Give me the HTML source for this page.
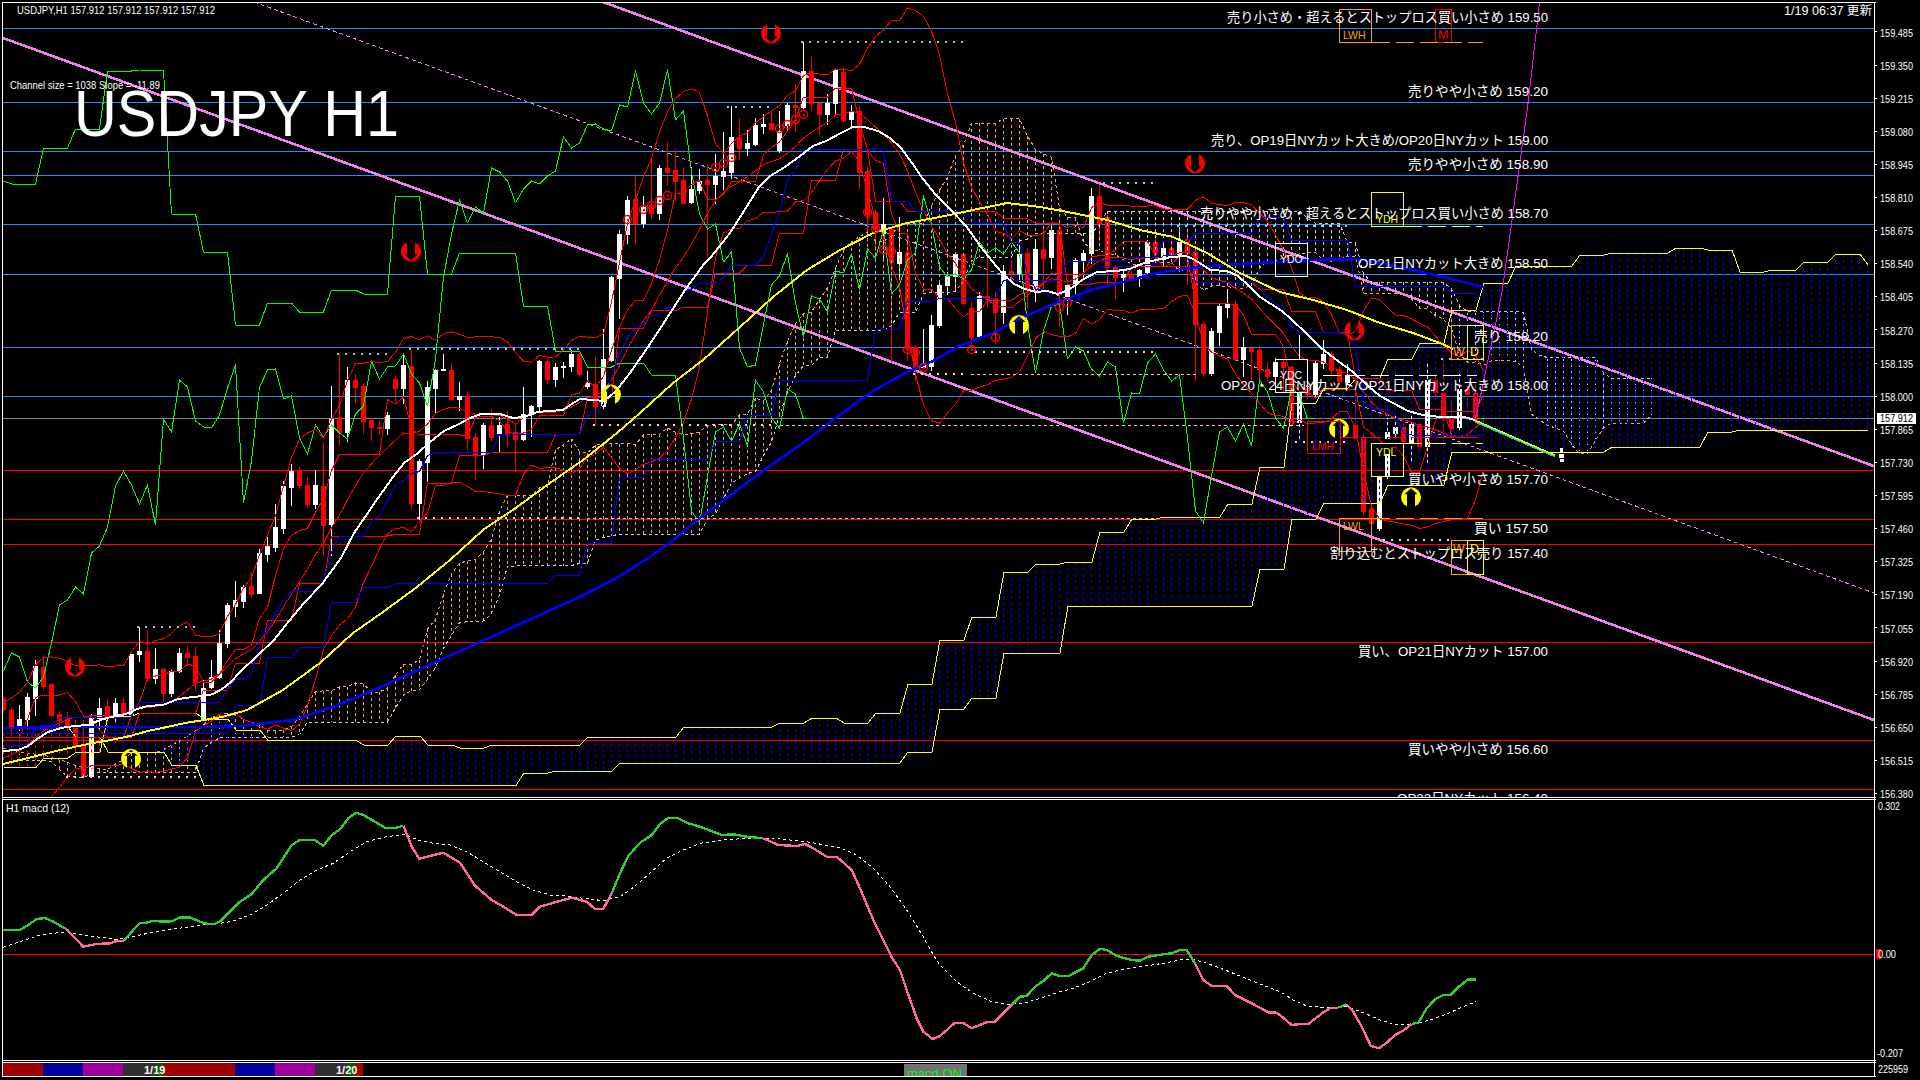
<!DOCTYPE html>
<html><head><meta charset="utf-8"><title>USDJPY H1</title>
<style>html,body{margin:0;padding:0;background:#000;overflow:hidden}svg{display:block}</style></head>
<body><svg width="1920" height="1080" viewBox="0 0 1920 1080" shape-rendering="crispEdges">
<rect width="1920" height="1080" fill="#000"/>
<defs><clipPath id="mc"><rect x="3" y="3" width="1872" height="794"/></clipPath></defs><g clip-path="url(#mc)">
<g id="levels">
<rect x="3" y="28" width="1872" height="1" fill="#1e90ff" />
<rect x="3" y="102" width="1872" height="1" fill="#1e90ff" />
<rect x="3" y="151" width="1872" height="1" fill="#1e90ff" />
<rect x="3" y="175" width="1872" height="1" fill="#1e90ff" />
<rect x="3" y="224" width="1872" height="1" fill="#1e90ff" />
<rect x="3" y="274" width="1872" height="1" fill="#1e90ff" />
<rect x="3" y="347" width="1872" height="1" fill="#1e90ff" />
<rect x="3" y="396" width="1872" height="1" fill="#1e90ff" />
<rect x="3" y="470" width="1872" height="1" fill="#ff0000" />
<rect x="3" y="519" width="1872" height="1" fill="#ff0000" />
<rect x="3" y="544" width="1872" height="1" fill="#ff0000" />
<rect x="3" y="642" width="1872" height="1" fill="#ff0000" />
<rect x="3" y="740" width="1872" height="1" fill="#ff0000" />
<rect x="3" y="789" width="1872" height="1" fill="#ff0000" />
<rect x="3" y="418" width="1872" height="1" fill="#778899" />
</g>
<g id="channel" shape-rendering="crispEdges">
<line x1="603" y1="2" x2="1875" y2="466.5" stroke="#ee82ee" stroke-width="2.6"/>
<line x1="3" y1="38" x2="1875" y2="720.4" stroke="#ee82ee" stroke-width="2.6"/>
<line x1="254" y1="2" x2="1875" y2="593.4" stroke="#ee82ee" stroke-width="1" stroke-dasharray="4 3"/>
</g>
<g id="candles">
<rect x="3" y="697" width="1" height="16" fill="#ff0000"/>
<rect x="1" y="699" width="5" height="11" fill="#ff0000"/>
<rect x="11" y="708" width="1" height="28" fill="#ff0000"/>
<rect x="9" y="710" width="5" height="19" fill="#ff0000"/>
<rect x="19" y="705" width="1" height="26" fill="#ffffff"/>
<rect x="17" y="719" width="5" height="10" fill="#ffffff"/>
<rect x="27" y="693" width="1" height="33" fill="#ffffff"/>
<rect x="25" y="697" width="5" height="23" fill="#ffffff"/>
<rect x="35" y="660" width="1" height="56" fill="#ffffff"/>
<rect x="33" y="666" width="5" height="33" fill="#ffffff"/>
<rect x="43" y="655" width="1" height="35" fill="#ff0000"/>
<rect x="41" y="667" width="5" height="20" fill="#ff0000"/>
<rect x="51" y="684" width="1" height="33" fill="#ff0000"/>
<rect x="49" y="684" width="5" height="32" fill="#ff0000"/>
<rect x="59" y="711" width="1" height="16" fill="#ff0000"/>
<rect x="57" y="714" width="5" height="7" fill="#ff0000"/>
<rect x="67" y="712" width="1" height="19" fill="#ff0000"/>
<rect x="65" y="719" width="5" height="7" fill="#ff0000"/>
<rect x="75" y="720" width="1" height="29" fill="#ff0000"/>
<rect x="73" y="725" width="5" height="21" fill="#ff0000"/>
<rect x="83" y="720" width="1" height="58" fill="#ff0000"/>
<rect x="81" y="745" width="5" height="32" fill="#ff0000"/>
<rect x="91" y="714" width="1" height="64" fill="#ffffff"/>
<rect x="89" y="717" width="5" height="60" fill="#ffffff"/>
<rect x="99" y="698" width="1" height="33" fill="#ffffff"/>
<rect x="97" y="708" width="5" height="11" fill="#ffffff"/>
<rect x="107" y="699" width="1" height="27" fill="#ff0000"/>
<rect x="105" y="706" width="5" height="11" fill="#ff0000"/>
<rect x="115" y="698" width="1" height="25" fill="#ffffff"/>
<rect x="113" y="703" width="5" height="12" fill="#ffffff"/>
<rect x="123" y="698" width="1" height="19" fill="#ff0000"/>
<rect x="121" y="703" width="5" height="12" fill="#ff0000"/>
<rect x="131" y="654" width="1" height="63" fill="#ffffff"/>
<rect x="129" y="654" width="5" height="61" fill="#ffffff"/>
<rect x="139" y="627" width="1" height="35" fill="#ffffff"/>
<rect x="137" y="651" width="5" height="4" fill="#ffffff"/>
<rect x="147" y="631" width="1" height="50" fill="#ff0000"/>
<rect x="145" y="651" width="5" height="28" fill="#ff0000"/>
<rect x="155" y="648" width="1" height="36" fill="#ffffff"/>
<rect x="153" y="669" width="5" height="10" fill="#ffffff"/>
<rect x="163" y="668" width="1" height="34" fill="#ff0000"/>
<rect x="161" y="669" width="5" height="25" fill="#ff0000"/>
<rect x="171" y="670" width="1" height="27" fill="#ffffff"/>
<rect x="169" y="671" width="5" height="23" fill="#ffffff"/>
<rect x="179" y="648" width="1" height="25" fill="#ffffff"/>
<rect x="177" y="653" width="5" height="19" fill="#ffffff"/>
<rect x="187" y="646" width="1" height="20" fill="#ff0000"/>
<rect x="185" y="653" width="5" height="5" fill="#ff0000"/>
<rect x="195" y="647" width="1" height="44" fill="#ff0000"/>
<rect x="193" y="656" width="5" height="27" fill="#ff0000"/>
<rect x="203" y="680" width="1" height="39" fill="#ffffff"/>
<rect x="201" y="688" width="5" height="31" fill="#ffffff"/>
<rect x="211" y="660" width="1" height="29" fill="#ffffff"/>
<rect x="209" y="677" width="5" height="11" fill="#ffffff"/>
<rect x="219" y="630" width="1" height="49" fill="#ffffff"/>
<rect x="217" y="643" width="5" height="35" fill="#ffffff"/>
<rect x="227" y="603" width="1" height="45" fill="#ffffff"/>
<rect x="225" y="605" width="5" height="39" fill="#ffffff"/>
<rect x="235" y="581" width="1" height="36" fill="#ffffff"/>
<rect x="233" y="600" width="5" height="7" fill="#ffffff"/>
<rect x="243" y="585" width="1" height="23" fill="#ffffff"/>
<rect x="241" y="587" width="5" height="15" fill="#ffffff"/>
<rect x="251" y="572" width="1" height="26" fill="#ff0000"/>
<rect x="249" y="586" width="5" height="9" fill="#ff0000"/>
<rect x="259" y="549" width="1" height="45" fill="#ffffff"/>
<rect x="257" y="553" width="5" height="41" fill="#ffffff"/>
<rect x="267" y="537" width="1" height="25" fill="#ffffff"/>
<rect x="265" y="546" width="5" height="9" fill="#ffffff"/>
<rect x="275" y="504" width="1" height="48" fill="#ffffff"/>
<rect x="273" y="527" width="5" height="21" fill="#ffffff"/>
<rect x="283" y="481" width="1" height="53" fill="#ffffff"/>
<rect x="281" y="486" width="5" height="43" fill="#ffffff"/>
<rect x="291" y="464" width="1" height="42" fill="#ffffff"/>
<rect x="289" y="471" width="5" height="17" fill="#ffffff"/>
<rect x="299" y="467" width="1" height="22" fill="#ff0000"/>
<rect x="297" y="470" width="5" height="16" fill="#ff0000"/>
<rect x="307" y="477" width="1" height="31" fill="#ff0000"/>
<rect x="305" y="485" width="5" height="20" fill="#ff0000"/>
<rect x="315" y="470" width="1" height="39" fill="#ffffff"/>
<rect x="313" y="485" width="5" height="20" fill="#ffffff"/>
<rect x="323" y="442" width="1" height="114" fill="#ff0000"/>
<rect x="321" y="486" width="5" height="40" fill="#ff0000"/>
<rect x="331" y="386" width="1" height="170" fill="#ffffff"/>
<rect x="329" y="419" width="5" height="106" fill="#ffffff"/>
<rect x="339" y="354" width="1" height="92" fill="#ff0000"/>
<rect x="337" y="417" width="5" height="16" fill="#ff0000"/>
<rect x="347" y="367" width="1" height="75" fill="#ffffff"/>
<rect x="345" y="380" width="5" height="53" fill="#ffffff"/>
<rect x="355" y="374" width="1" height="29" fill="#ff0000"/>
<rect x="353" y="380" width="5" height="8" fill="#ff0000"/>
<rect x="363" y="383" width="1" height="51" fill="#ff0000"/>
<rect x="361" y="386" width="5" height="36" fill="#ff0000"/>
<rect x="371" y="418" width="1" height="23" fill="#ff0000"/>
<rect x="369" y="420" width="5" height="8" fill="#ff0000"/>
<rect x="379" y="421" width="1" height="14" fill="#ff0000"/>
<rect x="377" y="427" width="5" height="2" fill="#ff0000"/>
<rect x="387" y="412" width="1" height="23" fill="#ffffff"/>
<rect x="385" y="415" width="5" height="14" fill="#ffffff"/>
<rect x="395" y="375" width="1" height="26" fill="#ff0000"/>
<rect x="393" y="379" width="5" height="10" fill="#ff0000"/>
<rect x="403" y="354" width="1" height="50" fill="#ffffff"/>
<rect x="401" y="365" width="5" height="24" fill="#ffffff"/>
<rect x="411" y="350" width="1" height="160" fill="#ff0000"/>
<rect x="409" y="366" width="5" height="138" fill="#ff0000"/>
<rect x="419" y="459" width="1" height="61" fill="#ffffff"/>
<rect x="417" y="461" width="5" height="43" fill="#ffffff"/>
<rect x="427" y="381" width="1" height="101" fill="#ffffff"/>
<rect x="425" y="387" width="5" height="76" fill="#ffffff"/>
<rect x="435" y="369" width="1" height="45" fill="#ffffff"/>
<rect x="433" y="370" width="5" height="19" fill="#ffffff"/>
<rect x="443" y="354" width="1" height="17" fill="#ffffff"/>
<rect x="441" y="369" width="5" height="2" fill="#ffffff"/>
<rect x="451" y="363" width="1" height="38" fill="#ff0000"/>
<rect x="449" y="370" width="5" height="30" fill="#ff0000"/>
<rect x="459" y="382" width="1" height="29" fill="#ffffff"/>
<rect x="457" y="396" width="5" height="4" fill="#ffffff"/>
<rect x="467" y="391" width="1" height="59" fill="#ff0000"/>
<rect x="465" y="396" width="5" height="43" fill="#ff0000"/>
<rect x="475" y="433" width="1" height="47" fill="#ff0000"/>
<rect x="473" y="437" width="5" height="18" fill="#ff0000"/>
<rect x="483" y="423" width="1" height="46" fill="#ffffff"/>
<rect x="481" y="425" width="5" height="30" fill="#ffffff"/>
<rect x="491" y="409" width="1" height="32" fill="#ff0000"/>
<rect x="489" y="425" width="5" height="13" fill="#ff0000"/>
<rect x="499" y="417" width="1" height="36" fill="#ffffff"/>
<rect x="497" y="425" width="5" height="9" fill="#ffffff"/>
<rect x="507" y="411" width="1" height="36" fill="#ff0000"/>
<rect x="505" y="424" width="5" height="10" fill="#ff0000"/>
<rect x="515" y="423" width="1" height="50" fill="#ff0000"/>
<rect x="513" y="432" width="5" height="8" fill="#ff0000"/>
<rect x="523" y="387" width="1" height="54" fill="#ffffff"/>
<rect x="521" y="414" width="5" height="26" fill="#ffffff"/>
<rect x="531" y="405" width="1" height="32" fill="#ffffff"/>
<rect x="529" y="406" width="5" height="9" fill="#ffffff"/>
<rect x="539" y="360" width="1" height="53" fill="#ffffff"/>
<rect x="537" y="361" width="5" height="46" fill="#ffffff"/>
<rect x="547" y="358" width="1" height="26" fill="#ff0000"/>
<rect x="545" y="361" width="5" height="19" fill="#ff0000"/>
<rect x="555" y="363" width="1" height="24" fill="#ffffff"/>
<rect x="553" y="367" width="5" height="13" fill="#ffffff"/>
<rect x="563" y="362" width="1" height="16" fill="#ffffff"/>
<rect x="561" y="366" width="5" height="2" fill="#ffffff"/>
<rect x="571" y="350" width="1" height="22" fill="#ffffff"/>
<rect x="569" y="354" width="5" height="13" fill="#ffffff"/>
<rect x="579" y="353" width="1" height="23" fill="#ff0000"/>
<rect x="577" y="354" width="5" height="21" fill="#ff0000"/>
<rect x="587" y="371" width="1" height="18" fill="#ffffff"/>
<rect x="585" y="383" width="5" height="4" fill="#ffffff"/>
<rect x="595" y="357" width="1" height="68" fill="#ff0000"/>
<rect x="593" y="384" width="5" height="23" fill="#ff0000"/>
<rect x="603" y="329" width="1" height="80" fill="#ffffff"/>
<rect x="601" y="359" width="5" height="48" fill="#ffffff"/>
<rect x="611" y="276" width="1" height="86" fill="#ffffff"/>
<rect x="609" y="277" width="5" height="84" fill="#ffffff"/>
<rect x="619" y="230" width="1" height="89" fill="#ffffff"/>
<rect x="617" y="234" width="5" height="45" fill="#ffffff"/>
<rect x="627" y="196" width="1" height="48" fill="#ffffff"/>
<rect x="625" y="200" width="5" height="35" fill="#ffffff"/>
<rect x="635" y="176" width="1" height="69" fill="#ff0000"/>
<rect x="633" y="199" width="5" height="25" fill="#ff0000"/>
<rect x="643" y="196" width="1" height="32" fill="#ffffff"/>
<rect x="641" y="207" width="5" height="17" fill="#ffffff"/>
<rect x="651" y="159" width="1" height="60" fill="#ff0000"/>
<rect x="649" y="205" width="5" height="9" fill="#ff0000"/>
<rect x="659" y="165" width="1" height="55" fill="#ffffff"/>
<rect x="657" y="168" width="5" height="46" fill="#ffffff"/>
<rect x="667" y="142" width="1" height="44" fill="#ff0000"/>
<rect x="665" y="168" width="5" height="5" fill="#ff0000"/>
<rect x="675" y="149" width="1" height="52" fill="#ff0000"/>
<rect x="673" y="170" width="5" height="12" fill="#ff0000"/>
<rect x="683" y="167" width="1" height="37" fill="#ff0000"/>
<rect x="681" y="180" width="5" height="24" fill="#ff0000"/>
<rect x="691" y="167" width="1" height="37" fill="#ffffff"/>
<rect x="689" y="189" width="5" height="14" fill="#ffffff"/>
<rect x="699" y="169" width="1" height="25" fill="#ffffff"/>
<rect x="697" y="181" width="5" height="10" fill="#ffffff"/>
<rect x="707" y="164" width="1" height="94" fill="#ff0000"/>
<rect x="705" y="180" width="5" height="5" fill="#ff0000"/>
<rect x="715" y="154" width="1" height="50" fill="#ffffff"/>
<rect x="713" y="176" width="5" height="9" fill="#ffffff"/>
<rect x="723" y="132" width="1" height="58" fill="#ffffff"/>
<rect x="721" y="171" width="5" height="6" fill="#ffffff"/>
<rect x="731" y="106" width="1" height="73" fill="#ffffff"/>
<rect x="729" y="137" width="5" height="36" fill="#ffffff"/>
<rect x="739" y="118" width="1" height="42" fill="#ff0000"/>
<rect x="737" y="137" width="5" height="12" fill="#ff0000"/>
<rect x="747" y="130" width="1" height="26" fill="#ffffff"/>
<rect x="745" y="143" width="5" height="6" fill="#ffffff"/>
<rect x="755" y="118" width="1" height="28" fill="#ffffff"/>
<rect x="753" y="125" width="5" height="20" fill="#ffffff"/>
<rect x="763" y="114" width="1" height="20" fill="#ffffff"/>
<rect x="761" y="124" width="5" height="3" fill="#ffffff"/>
<rect x="771" y="112" width="1" height="19" fill="#ff0000"/>
<rect x="769" y="123" width="5" height="7" fill="#ff0000"/>
<rect x="779" y="111" width="1" height="42" fill="#ffffff"/>
<rect x="777" y="131" width="5" height="20" fill="#ffffff"/>
<rect x="787" y="103" width="1" height="29" fill="#ffffff"/>
<rect x="785" y="105" width="5" height="21" fill="#ffffff"/>
<rect x="795" y="84" width="1" height="48" fill="#ff0000"/>
<rect x="793" y="105" width="5" height="3" fill="#ff0000"/>
<rect x="803" y="42" width="1" height="67" fill="#ffffff"/>
<rect x="801" y="71" width="5" height="37" fill="#ffffff"/>
<rect x="811" y="57" width="1" height="54" fill="#ff0000"/>
<rect x="809" y="71" width="5" height="33" fill="#ff0000"/>
<rect x="819" y="102" width="1" height="33" fill="#ff0000"/>
<rect x="817" y="103" width="5" height="12" fill="#ff0000"/>
<rect x="827" y="94" width="1" height="31" fill="#ffffff"/>
<rect x="825" y="103" width="5" height="12" fill="#ffffff"/>
<rect x="835" y="69" width="1" height="46" fill="#ffffff"/>
<rect x="833" y="70" width="5" height="34" fill="#ffffff"/>
<rect x="843" y="67" width="1" height="56" fill="#ff0000"/>
<rect x="841" y="72" width="5" height="49" fill="#ff0000"/>
<rect x="851" y="105" width="1" height="23" fill="#ffffff"/>
<rect x="849" y="111" width="5" height="9" fill="#ffffff"/>
<rect x="859" y="106" width="1" height="83" fill="#ff0000"/>
<rect x="857" y="111" width="5" height="62" fill="#ff0000"/>
<rect x="867" y="167" width="1" height="66" fill="#ff0000"/>
<rect x="865" y="171" width="5" height="44" fill="#ff0000"/>
<rect x="875" y="210" width="1" height="45" fill="#ff0000"/>
<rect x="873" y="212" width="5" height="18" fill="#ff0000"/>
<rect x="883" y="198" width="1" height="63" fill="#ffffff"/>
<rect x="881" y="224" width="5" height="10" fill="#ffffff"/>
<rect x="891" y="227" width="1" height="135" fill="#ff0000"/>
<rect x="889" y="229" width="5" height="34" fill="#ff0000"/>
<rect x="899" y="217" width="1" height="60" fill="#ffffff"/>
<rect x="897" y="252" width="5" height="12" fill="#ffffff"/>
<rect x="907" y="237" width="1" height="124" fill="#ff0000"/>
<rect x="905" y="252" width="5" height="97" fill="#ff0000"/>
<rect x="915" y="345" width="1" height="36" fill="#ff0000"/>
<rect x="913" y="347" width="5" height="21" fill="#ff0000"/>
<rect x="923" y="329" width="1" height="40" fill="#ffffff"/>
<rect x="921" y="365" width="5" height="3" fill="#ffffff"/>
<rect x="931" y="315" width="1" height="56" fill="#ffffff"/>
<rect x="929" y="325" width="5" height="42" fill="#ffffff"/>
<rect x="939" y="283" width="1" height="45" fill="#ffffff"/>
<rect x="937" y="285" width="5" height="41" fill="#ffffff"/>
<rect x="947" y="272" width="1" height="23" fill="#ffffff"/>
<rect x="945" y="276" width="5" height="10" fill="#ffffff"/>
<rect x="955" y="253" width="1" height="37" fill="#ffffff"/>
<rect x="953" y="254" width="5" height="23" fill="#ffffff"/>
<rect x="963" y="253" width="1" height="52" fill="#ff0000"/>
<rect x="961" y="254" width="5" height="50" fill="#ff0000"/>
<rect x="971" y="302" width="1" height="47" fill="#ff0000"/>
<rect x="969" y="308" width="5" height="30" fill="#ff0000"/>
<rect x="979" y="292" width="1" height="46" fill="#ffffff"/>
<rect x="977" y="296" width="5" height="41" fill="#ffffff"/>
<rect x="987" y="258" width="1" height="49" fill="#ff0000"/>
<rect x="985" y="296" width="5" height="4" fill="#ff0000"/>
<rect x="995" y="292" width="1" height="52" fill="#ff0000"/>
<rect x="993" y="298" width="5" height="15" fill="#ff0000"/>
<rect x="1003" y="265" width="1" height="59" fill="#ffffff"/>
<rect x="1001" y="271" width="5" height="42" fill="#ffffff"/>
<rect x="1011" y="260" width="1" height="21" fill="#ff0000"/>
<rect x="1009" y="271" width="5" height="3" fill="#ff0000"/>
<rect x="1019" y="241" width="1" height="41" fill="#ffffff"/>
<rect x="1017" y="254" width="5" height="20" fill="#ffffff"/>
<rect x="1027" y="248" width="1" height="60" fill="#ff0000"/>
<rect x="1025" y="253" width="5" height="38" fill="#ff0000"/>
<rect x="1035" y="239" width="1" height="63" fill="#ffffff"/>
<rect x="1033" y="249" width="5" height="43" fill="#ffffff"/>
<rect x="1043" y="223" width="1" height="69" fill="#ff0000"/>
<rect x="1041" y="249" width="5" height="10" fill="#ff0000"/>
<rect x="1051" y="224" width="1" height="45" fill="#ffffff"/>
<rect x="1049" y="230" width="5" height="28" fill="#ffffff"/>
<rect x="1059" y="224" width="1" height="103" fill="#ff0000"/>
<rect x="1057" y="230" width="5" height="65" fill="#ff0000"/>
<rect x="1067" y="283" width="1" height="32" fill="#ffffff"/>
<rect x="1065" y="285" width="5" height="12" fill="#ffffff"/>
<rect x="1075" y="258" width="1" height="36" fill="#ffffff"/>
<rect x="1073" y="260" width="5" height="25" fill="#ffffff"/>
<rect x="1083" y="250" width="1" height="29" fill="#ffffff"/>
<rect x="1081" y="253" width="5" height="8" fill="#ffffff"/>
<rect x="1091" y="188" width="1" height="76" fill="#ffffff"/>
<rect x="1089" y="196" width="5" height="58" fill="#ffffff"/>
<rect x="1099" y="185" width="1" height="57" fill="#ff0000"/>
<rect x="1097" y="196" width="5" height="29" fill="#ff0000"/>
<rect x="1107" y="215" width="1" height="70" fill="#ff0000"/>
<rect x="1105" y="217" width="5" height="51" fill="#ff0000"/>
<rect x="1115" y="265" width="1" height="34" fill="#ff0000"/>
<rect x="1113" y="267" width="5" height="11" fill="#ff0000"/>
<rect x="1123" y="269" width="1" height="23" fill="#ffffff"/>
<rect x="1121" y="274" width="5" height="4" fill="#ffffff"/>
<rect x="1131" y="271" width="1" height="10" fill="#ff0000"/>
<rect x="1129" y="274" width="5" height="6" fill="#ff0000"/>
<rect x="1139" y="269" width="1" height="18" fill="#ffffff"/>
<rect x="1137" y="270" width="5" height="9" fill="#ffffff"/>
<rect x="1147" y="240" width="1" height="34" fill="#ffffff"/>
<rect x="1145" y="242" width="5" height="31" fill="#ffffff"/>
<rect x="1155" y="236" width="1" height="23" fill="#ff0000"/>
<rect x="1153" y="242" width="5" height="12" fill="#ff0000"/>
<rect x="1163" y="244" width="1" height="22" fill="#ffffff"/>
<rect x="1161" y="248" width="5" height="12" fill="#ffffff"/>
<rect x="1171" y="239" width="1" height="17" fill="#ff0000"/>
<rect x="1169" y="248" width="5" height="7" fill="#ff0000"/>
<rect x="1179" y="227" width="1" height="41" fill="#ffffff"/>
<rect x="1177" y="242" width="5" height="13" fill="#ffffff"/>
<rect x="1187" y="230" width="1" height="55" fill="#ff0000"/>
<rect x="1185" y="239" width="5" height="15" fill="#ff0000"/>
<rect x="1195" y="250" width="1" height="131" fill="#ff0000"/>
<rect x="1193" y="252" width="5" height="73" fill="#ff0000"/>
<rect x="1203" y="322" width="1" height="54" fill="#ff0000"/>
<rect x="1201" y="324" width="5" height="50" fill="#ff0000"/>
<rect x="1211" y="328" width="1" height="48" fill="#ffffff"/>
<rect x="1209" y="331" width="5" height="43" fill="#ffffff"/>
<rect x="1219" y="304" width="1" height="42" fill="#ffffff"/>
<rect x="1217" y="306" width="5" height="27" fill="#ffffff"/>
<rect x="1227" y="289" width="1" height="29" fill="#ffffff"/>
<rect x="1225" y="304" width="5" height="4" fill="#ffffff"/>
<rect x="1235" y="300" width="1" height="61" fill="#ff0000"/>
<rect x="1233" y="304" width="5" height="56" fill="#ff0000"/>
<rect x="1243" y="337" width="1" height="40" fill="#ffffff"/>
<rect x="1241" y="347" width="5" height="13" fill="#ffffff"/>
<rect x="1251" y="346" width="1" height="35" fill="#ff0000"/>
<rect x="1249" y="348" width="5" height="4" fill="#ff0000"/>
<rect x="1259" y="345" width="1" height="36" fill="#ff0000"/>
<rect x="1257" y="350" width="5" height="20" fill="#ff0000"/>
<rect x="1267" y="362" width="1" height="19" fill="#ff0000"/>
<rect x="1265" y="369" width="5" height="8" fill="#ff0000"/>
<rect x="1275" y="358" width="1" height="21" fill="#ffffff"/>
<rect x="1273" y="362" width="5" height="15" fill="#ffffff"/>
<rect x="1283" y="360" width="1" height="34" fill="#ff0000"/>
<rect x="1281" y="362" width="5" height="6" fill="#ff0000"/>
<rect x="1291" y="366" width="1" height="61" fill="#ff0000"/>
<rect x="1289" y="367" width="5" height="57" fill="#ff0000"/>
<rect x="1299" y="391" width="1" height="48" fill="#ffffff"/>
<rect x="1297" y="393" width="5" height="30" fill="#ffffff"/>
<rect x="1307" y="386" width="1" height="13" fill="#ff0000"/>
<rect x="1305" y="388" width="5" height="7" fill="#ff0000"/>
<rect x="1315" y="360" width="1" height="37" fill="#ffffff"/>
<rect x="1313" y="363" width="5" height="32" fill="#ffffff"/>
<rect x="1323" y="340" width="1" height="29" fill="#ffffff"/>
<rect x="1321" y="354" width="5" height="10" fill="#ffffff"/>
<rect x="1331" y="351" width="1" height="24" fill="#ff0000"/>
<rect x="1329" y="354" width="5" height="17" fill="#ff0000"/>
<rect x="1339" y="367" width="1" height="18" fill="#ff0000"/>
<rect x="1337" y="369" width="5" height="13" fill="#ff0000"/>
<rect x="1347" y="364" width="1" height="21" fill="#ffffff"/>
<rect x="1345" y="375" width="5" height="8" fill="#ffffff"/>
<rect x="1355" y="382" width="1" height="59" fill="#ff0000"/>
<rect x="1353" y="425" width="5" height="14" fill="#ff0000"/>
<rect x="1363" y="435" width="1" height="80" fill="#ff0000"/>
<rect x="1361" y="437" width="5" height="75" fill="#ff0000"/>
<rect x="1371" y="507" width="1" height="20" fill="#ff0000"/>
<rect x="1369" y="509" width="5" height="15" fill="#ff0000"/>
<rect x="1379" y="474" width="1" height="57" fill="#ffffff"/>
<rect x="1377" y="476" width="5" height="53" fill="#ffffff"/>
<rect x="1387" y="418" width="1" height="61" fill="#ffffff"/>
<rect x="1385" y="432" width="5" height="45" fill="#ffffff"/>
<rect x="1395" y="415" width="1" height="22" fill="#ffffff"/>
<rect x="1393" y="427" width="5" height="7" fill="#ffffff"/>
<rect x="1403" y="424" width="1" height="20" fill="#ff0000"/>
<rect x="1401" y="427" width="5" height="15" fill="#ff0000"/>
<rect x="1411" y="415" width="1" height="47" fill="#ffffff"/>
<rect x="1409" y="424" width="5" height="19" fill="#ffffff"/>
<rect x="1419" y="422" width="1" height="27" fill="#ff0000"/>
<rect x="1417" y="424" width="5" height="23" fill="#ff0000"/>
<rect x="1427" y="363" width="1" height="101" fill="#ffffff"/>
<rect x="1425" y="380" width="5" height="67" fill="#ffffff"/>
<rect x="1435" y="376" width="1" height="21" fill="#ff0000"/>
<rect x="1433" y="380" width="5" height="13" fill="#ff0000"/>
<rect x="1443" y="359" width="1" height="73" fill="#ff0000"/>
<rect x="1441" y="393" width="5" height="26" fill="#ff0000"/>
<rect x="1451" y="401" width="1" height="31" fill="#ff0000"/>
<rect x="1449" y="418" width="5" height="11" fill="#ff0000"/>
<rect x="1459" y="374" width="1" height="58" fill="#ffffff"/>
<rect x="1457" y="389" width="5" height="39" fill="#ffffff"/>
<rect x="1467" y="386" width="1" height="20" fill="#ff0000"/>
<rect x="1465" y="389" width="5" height="6" fill="#ff0000"/>
<rect x="1475" y="385" width="1" height="37" fill="#ff0000"/>
<rect x="1473" y="393" width="5" height="27" fill="#ff0000"/>
<rect x="1483" y="418" width="1" height="1" fill="#00ff00"/>
<rect x="1481" y="418" width="5" height="1" fill="#00ff00"/>
</g>
<g id="cloudH1">
<line x1="19.5" y1="752" x2="19.5" y2="760" stroke="#f4a460" stroke-width="1" stroke-dasharray="3 3"/>
<line x1="27.5" y1="753" x2="27.5" y2="760" stroke="#f4a460" stroke-width="1" stroke-dasharray="3 3"/>
<line x1="35.5" y1="754" x2="35.5" y2="760" stroke="#f4a460" stroke-width="1" stroke-dasharray="3 3"/>
<line x1="43.5" y1="755" x2="43.5" y2="760" stroke="#f4a460" stroke-width="1" stroke-dasharray="3 3"/>
<line x1="51.5" y1="757" x2="51.5" y2="762" stroke="#f4a460" stroke-width="1" stroke-dasharray="3 3"/>
<line x1="59.5" y1="760" x2="59.5" y2="770" stroke="#f4a460" stroke-width="1" stroke-dasharray="3 3"/>
<line x1="67.5" y1="762" x2="67.5" y2="777" stroke="#f4a460" stroke-width="1" stroke-dasharray="3 3"/>
<line x1="75.5" y1="766" x2="75.5" y2="777" stroke="#f4a460" stroke-width="1" stroke-dasharray="3 3"/>
<line x1="83.5" y1="768" x2="83.5" y2="777" stroke="#f4a460" stroke-width="1" stroke-dasharray="3 3"/>
<line x1="91.5" y1="768" x2="91.5" y2="774" stroke="#f4a460" stroke-width="1" stroke-dasharray="3 3"/>
<line x1="99.5" y1="769" x2="99.5" y2="772" stroke="#f4a460" stroke-width="1" stroke-dasharray="3 3"/>
<line x1="107.5" y1="770" x2="107.5" y2="772" stroke="#f4a460" stroke-width="1" stroke-dasharray="3 3"/>
<line x1="115.5" y1="764" x2="115.5" y2="772" stroke="#f4a460" stroke-width="1" stroke-dasharray="3 3"/>
<line x1="123.5" y1="760" x2="123.5" y2="772" stroke="#f4a460" stroke-width="1" stroke-dasharray="3 3"/>
<line x1="131.5" y1="753" x2="131.5" y2="772" stroke="#f4a460" stroke-width="1" stroke-dasharray="3 3"/>
<line x1="139.5" y1="753" x2="139.5" y2="772" stroke="#f4a460" stroke-width="1" stroke-dasharray="3 3"/>
<line x1="147.5" y1="752" x2="147.5" y2="772" stroke="#f4a460" stroke-width="1" stroke-dasharray="3 3"/>
<line x1="155.5" y1="752" x2="155.5" y2="772" stroke="#f4a460" stroke-width="1" stroke-dasharray="3 3"/>
<line x1="163.5" y1="750" x2="163.5" y2="772" stroke="#f4a460" stroke-width="1" stroke-dasharray="3 3"/>
<line x1="171.5" y1="745" x2="171.5" y2="772" stroke="#f4a460" stroke-width="1" stroke-dasharray="3 3"/>
<line x1="179.5" y1="741" x2="179.5" y2="772" stroke="#f4a460" stroke-width="1" stroke-dasharray="3 3"/>
<line x1="187.5" y1="736" x2="187.5" y2="772" stroke="#f4a460" stroke-width="1" stroke-dasharray="3 3"/>
<line x1="195.5" y1="731" x2="195.5" y2="772" stroke="#f4a460" stroke-width="1" stroke-dasharray="3 3"/>
<line x1="203.5" y1="725" x2="203.5" y2="748" stroke="#f4a460" stroke-width="1" stroke-dasharray="3 3"/>
<line x1="211.5" y1="717" x2="211.5" y2="742" stroke="#f4a460" stroke-width="1" stroke-dasharray="3 3"/>
<line x1="219.5" y1="714" x2="219.5" y2="738" stroke="#f4a460" stroke-width="1" stroke-dasharray="3 3"/>
<line x1="227.5" y1="713" x2="227.5" y2="737" stroke="#f4a460" stroke-width="1" stroke-dasharray="3 3"/>
<line x1="235.5" y1="713" x2="235.5" y2="737" stroke="#f4a460" stroke-width="1" stroke-dasharray="3 3"/>
<line x1="243.5" y1="720" x2="243.5" y2="737" stroke="#f4a460" stroke-width="1" stroke-dasharray="3 3"/>
<line x1="251.5" y1="722" x2="251.5" y2="737" stroke="#f4a460" stroke-width="1" stroke-dasharray="3 3"/>
<line x1="259.5" y1="725" x2="259.5" y2="737" stroke="#f4a460" stroke-width="1" stroke-dasharray="3 3"/>
<line x1="267.5" y1="730" x2="267.5" y2="737" stroke="#f4a460" stroke-width="1" stroke-dasharray="3 3"/>
<line x1="275.5" y1="731" x2="275.5" y2="737" stroke="#f4a460" stroke-width="1" stroke-dasharray="3 3"/>
<line x1="283.5" y1="730" x2="283.5" y2="737" stroke="#f4a460" stroke-width="1" stroke-dasharray="3 3"/>
<line x1="291.5" y1="726" x2="291.5" y2="737" stroke="#f4a460" stroke-width="1" stroke-dasharray="3 3"/>
<line x1="299.5" y1="717" x2="299.5" y2="734" stroke="#f4a460" stroke-width="1" stroke-dasharray="3 3"/>
<line x1="307.5" y1="704" x2="307.5" y2="722" stroke="#f4a460" stroke-width="1" stroke-dasharray="3 3"/>
<line x1="315.5" y1="692" x2="315.5" y2="722" stroke="#f4a460" stroke-width="1" stroke-dasharray="3 3"/>
<line x1="323.5" y1="691" x2="323.5" y2="722" stroke="#f4a460" stroke-width="1" stroke-dasharray="3 3"/>
<line x1="331.5" y1="691" x2="331.5" y2="722" stroke="#f4a460" stroke-width="1" stroke-dasharray="3 3"/>
<line x1="339.5" y1="687" x2="339.5" y2="722" stroke="#f4a460" stroke-width="1" stroke-dasharray="3 3"/>
<line x1="347.5" y1="687" x2="347.5" y2="722" stroke="#f4a460" stroke-width="1" stroke-dasharray="3 3"/>
<line x1="355.5" y1="683" x2="355.5" y2="722" stroke="#f4a460" stroke-width="1" stroke-dasharray="3 3"/>
<line x1="363.5" y1="684" x2="363.5" y2="722" stroke="#f4a460" stroke-width="1" stroke-dasharray="3 3"/>
<line x1="371.5" y1="692" x2="371.5" y2="722" stroke="#f4a460" stroke-width="1" stroke-dasharray="3 3"/>
<line x1="379.5" y1="692" x2="379.5" y2="722" stroke="#f4a460" stroke-width="1" stroke-dasharray="3 3"/>
<line x1="387.5" y1="688" x2="387.5" y2="722" stroke="#f4a460" stroke-width="1" stroke-dasharray="3 3"/>
<line x1="395.5" y1="675" x2="395.5" y2="708" stroke="#f4a460" stroke-width="1" stroke-dasharray="3 3"/>
<line x1="403.5" y1="664" x2="403.5" y2="695" stroke="#f4a460" stroke-width="1" stroke-dasharray="3 3"/>
<line x1="411.5" y1="664" x2="411.5" y2="691" stroke="#f4a460" stroke-width="1" stroke-dasharray="3 3"/>
<line x1="419.5" y1="660" x2="419.5" y2="690" stroke="#f4a460" stroke-width="1" stroke-dasharray="3 3"/>
<line x1="427.5" y1="629" x2="427.5" y2="679" stroke="#f4a460" stroke-width="1" stroke-dasharray="3 3"/>
<line x1="435.5" y1="619" x2="435.5" y2="668" stroke="#f4a460" stroke-width="1" stroke-dasharray="3 3"/>
<line x1="443.5" y1="594" x2="443.5" y2="648" stroke="#f4a460" stroke-width="1" stroke-dasharray="3 3"/>
<line x1="451.5" y1="574" x2="451.5" y2="635" stroke="#f4a460" stroke-width="1" stroke-dasharray="3 3"/>
<line x1="459.5" y1="563" x2="459.5" y2="623" stroke="#f4a460" stroke-width="1" stroke-dasharray="3 3"/>
<line x1="467.5" y1="561" x2="467.5" y2="622" stroke="#f4a460" stroke-width="1" stroke-dasharray="3 3"/>
<line x1="475.5" y1="560" x2="475.5" y2="621" stroke="#f4a460" stroke-width="1" stroke-dasharray="3 3"/>
<line x1="483.5" y1="552" x2="483.5" y2="621" stroke="#f4a460" stroke-width="1" stroke-dasharray="3 3"/>
<line x1="491.5" y1="539" x2="491.5" y2="614" stroke="#f4a460" stroke-width="1" stroke-dasharray="3 3"/>
<line x1="499.5" y1="511" x2="499.5" y2="595" stroke="#f4a460" stroke-width="1" stroke-dasharray="3 3"/>
<line x1="507.5" y1="495" x2="507.5" y2="566" stroke="#f4a460" stroke-width="1" stroke-dasharray="3 3"/>
<line x1="515.5" y1="495" x2="515.5" y2="566" stroke="#f4a460" stroke-width="1" stroke-dasharray="3 3"/>
<line x1="523.5" y1="495" x2="523.5" y2="566" stroke="#f4a460" stroke-width="1" stroke-dasharray="3 3"/>
<line x1="531.5" y1="495" x2="531.5" y2="566" stroke="#f4a460" stroke-width="1" stroke-dasharray="3 3"/>
<line x1="539.5" y1="488" x2="539.5" y2="566" stroke="#f4a460" stroke-width="1" stroke-dasharray="3 3"/>
<line x1="547.5" y1="485" x2="547.5" y2="566" stroke="#f4a460" stroke-width="1" stroke-dasharray="3 3"/>
<line x1="555.5" y1="450" x2="555.5" y2="566" stroke="#f4a460" stroke-width="1" stroke-dasharray="3 3"/>
<line x1="563.5" y1="444" x2="563.5" y2="566" stroke="#f4a460" stroke-width="1" stroke-dasharray="3 3"/>
<line x1="571.5" y1="439" x2="571.5" y2="566" stroke="#f4a460" stroke-width="1" stroke-dasharray="3 3"/>
<line x1="579.5" y1="452" x2="579.5" y2="564" stroke="#f4a460" stroke-width="1" stroke-dasharray="3 3"/>
<line x1="587.5" y1="453" x2="587.5" y2="564" stroke="#f4a460" stroke-width="1" stroke-dasharray="3 3"/>
<line x1="595.5" y1="445" x2="595.5" y2="540" stroke="#f4a460" stroke-width="1" stroke-dasharray="3 3"/>
<line x1="603.5" y1="444" x2="603.5" y2="538" stroke="#f4a460" stroke-width="1" stroke-dasharray="3 3"/>
<line x1="611.5" y1="444" x2="611.5" y2="536" stroke="#f4a460" stroke-width="1" stroke-dasharray="3 3"/>
<line x1="619.5" y1="444" x2="619.5" y2="534" stroke="#f4a460" stroke-width="1" stroke-dasharray="3 3"/>
<line x1="627.5" y1="444" x2="627.5" y2="534" stroke="#f4a460" stroke-width="1" stroke-dasharray="3 3"/>
<line x1="635.5" y1="444" x2="635.5" y2="534" stroke="#f4a460" stroke-width="1" stroke-dasharray="3 3"/>
<line x1="643.5" y1="435" x2="643.5" y2="534" stroke="#f4a460" stroke-width="1" stroke-dasharray="3 3"/>
<line x1="651.5" y1="434" x2="651.5" y2="534" stroke="#f4a460" stroke-width="1" stroke-dasharray="3 3"/>
<line x1="659.5" y1="434" x2="659.5" y2="534" stroke="#f4a460" stroke-width="1" stroke-dasharray="3 3"/>
<line x1="667.5" y1="428" x2="667.5" y2="534" stroke="#f4a460" stroke-width="1" stroke-dasharray="3 3"/>
<line x1="675.5" y1="432" x2="675.5" y2="534" stroke="#f4a460" stroke-width="1" stroke-dasharray="3 3"/>
<line x1="683.5" y1="435" x2="683.5" y2="534" stroke="#f4a460" stroke-width="1" stroke-dasharray="3 3"/>
<line x1="691.5" y1="434" x2="691.5" y2="534" stroke="#f4a460" stroke-width="1" stroke-dasharray="3 3"/>
<line x1="699.5" y1="432" x2="699.5" y2="534" stroke="#f4a460" stroke-width="1" stroke-dasharray="3 3"/>
<line x1="707.5" y1="425" x2="707.5" y2="519" stroke="#f4a460" stroke-width="1" stroke-dasharray="3 3"/>
<line x1="715.5" y1="425" x2="715.5" y2="514" stroke="#f4a460" stroke-width="1" stroke-dasharray="3 3"/>
<line x1="723.5" y1="425" x2="723.5" y2="498" stroke="#f4a460" stroke-width="1" stroke-dasharray="3 3"/>
<line x1="731.5" y1="425" x2="731.5" y2="483" stroke="#f4a460" stroke-width="1" stroke-dasharray="3 3"/>
<line x1="739.5" y1="415" x2="739.5" y2="478" stroke="#f4a460" stroke-width="1" stroke-dasharray="3 3"/>
<line x1="747.5" y1="414" x2="747.5" y2="474" stroke="#f4a460" stroke-width="1" stroke-dasharray="3 3"/>
<line x1="755.5" y1="398" x2="755.5" y2="472" stroke="#f4a460" stroke-width="1" stroke-dasharray="3 3"/>
<line x1="763.5" y1="401" x2="763.5" y2="456" stroke="#f4a460" stroke-width="1" stroke-dasharray="3 3"/>
<line x1="771.5" y1="390" x2="771.5" y2="442" stroke="#f4a460" stroke-width="1" stroke-dasharray="3 3"/>
<line x1="779.5" y1="364" x2="779.5" y2="416" stroke="#f4a460" stroke-width="1" stroke-dasharray="3 3"/>
<line x1="787.5" y1="341" x2="787.5" y2="392" stroke="#f4a460" stroke-width="1" stroke-dasharray="3 3"/>
<line x1="795.5" y1="324" x2="795.5" y2="376" stroke="#f4a460" stroke-width="1" stroke-dasharray="3 3"/>
<line x1="803.5" y1="314" x2="803.5" y2="366" stroke="#f4a460" stroke-width="1" stroke-dasharray="3 3"/>
<line x1="811.5" y1="312" x2="811.5" y2="366" stroke="#f4a460" stroke-width="1" stroke-dasharray="3 3"/>
<line x1="819.5" y1="300" x2="819.5" y2="357" stroke="#f4a460" stroke-width="1" stroke-dasharray="3 3"/>
<line x1="827.5" y1="288" x2="827.5" y2="357" stroke="#f4a460" stroke-width="1" stroke-dasharray="3 3"/>
<line x1="835.5" y1="268" x2="835.5" y2="330" stroke="#f4a460" stroke-width="1" stroke-dasharray="3 3"/>
<line x1="843.5" y1="250" x2="843.5" y2="330" stroke="#f4a460" stroke-width="1" stroke-dasharray="3 3"/>
<line x1="851.5" y1="242" x2="851.5" y2="330" stroke="#f4a460" stroke-width="1" stroke-dasharray="3 3"/>
<line x1="859.5" y1="237" x2="859.5" y2="330" stroke="#f4a460" stroke-width="1" stroke-dasharray="3 3"/>
<line x1="867.5" y1="232" x2="867.5" y2="330" stroke="#f4a460" stroke-width="1" stroke-dasharray="3 3"/>
<line x1="875.5" y1="241" x2="875.5" y2="330" stroke="#f4a460" stroke-width="1" stroke-dasharray="3 3"/>
<line x1="883.5" y1="241" x2="883.5" y2="330" stroke="#f4a460" stroke-width="1" stroke-dasharray="3 3"/>
<line x1="891.5" y1="236" x2="891.5" y2="326" stroke="#f4a460" stroke-width="1" stroke-dasharray="3 3"/>
<line x1="899.5" y1="223" x2="899.5" y2="312" stroke="#f4a460" stroke-width="1" stroke-dasharray="3 3"/>
<line x1="907.5" y1="223" x2="907.5" y2="312" stroke="#f4a460" stroke-width="1" stroke-dasharray="3 3"/>
<line x1="915.5" y1="223" x2="915.5" y2="312" stroke="#f4a460" stroke-width="1" stroke-dasharray="3 3"/>
<line x1="923.5" y1="223" x2="923.5" y2="294" stroke="#f4a460" stroke-width="1" stroke-dasharray="3 3"/>
<line x1="931.5" y1="206" x2="931.5" y2="292" stroke="#f4a460" stroke-width="1" stroke-dasharray="3 3"/>
<line x1="939.5" y1="190" x2="939.5" y2="292" stroke="#f4a460" stroke-width="1" stroke-dasharray="3 3"/>
<line x1="947.5" y1="177" x2="947.5" y2="292" stroke="#f4a460" stroke-width="1" stroke-dasharray="3 3"/>
<line x1="955.5" y1="156" x2="955.5" y2="291" stroke="#f4a460" stroke-width="1" stroke-dasharray="3 3"/>
<line x1="963.5" y1="145" x2="963.5" y2="282" stroke="#f4a460" stroke-width="1" stroke-dasharray="3 3"/>
<line x1="971.5" y1="123" x2="971.5" y2="260" stroke="#f4a460" stroke-width="1" stroke-dasharray="3 3"/>
<line x1="979.5" y1="123" x2="979.5" y2="257" stroke="#f4a460" stroke-width="1" stroke-dasharray="3 3"/>
<line x1="987.5" y1="123" x2="987.5" y2="257" stroke="#f4a460" stroke-width="1" stroke-dasharray="3 3"/>
<line x1="995.5" y1="123" x2="995.5" y2="257" stroke="#f4a460" stroke-width="1" stroke-dasharray="3 3"/>
<line x1="1003.5" y1="119" x2="1003.5" y2="257" stroke="#f4a460" stroke-width="1" stroke-dasharray="3 3"/>
<line x1="1011.5" y1="119" x2="1011.5" y2="257" stroke="#f4a460" stroke-width="1" stroke-dasharray="3 3"/>
<line x1="1019.5" y1="119" x2="1019.5" y2="241" stroke="#f4a460" stroke-width="1" stroke-dasharray="3 3"/>
<line x1="1027.5" y1="136" x2="1027.5" y2="239" stroke="#f4a460" stroke-width="1" stroke-dasharray="3 3"/>
<line x1="1035.5" y1="150" x2="1035.5" y2="233" stroke="#f4a460" stroke-width="1" stroke-dasharray="3 3"/>
<line x1="1043.5" y1="154" x2="1043.5" y2="233" stroke="#f4a460" stroke-width="1" stroke-dasharray="3 3"/>
<line x1="1051.5" y1="157" x2="1051.5" y2="233" stroke="#f4a460" stroke-width="1" stroke-dasharray="3 3"/>
<line x1="1059.5" y1="208" x2="1059.5" y2="233" stroke="#f4a460" stroke-width="1" stroke-dasharray="3 3"/>
<line x1="1067.5" y1="217" x2="1067.5" y2="233" stroke="#f4a460" stroke-width="1" stroke-dasharray="3 3"/>
<line x1="1075.5" y1="218" x2="1075.5" y2="233" stroke="#f4a460" stroke-width="1" stroke-dasharray="3 3"/>
<line x1="1083.5" y1="233" x2="1083.5" y2="242" stroke="#d8bfd8" stroke-width="1" stroke-dasharray="3 3"/>
<line x1="1091.5" y1="233" x2="1091.5" y2="250" stroke="#d8bfd8" stroke-width="1" stroke-dasharray="3 3"/>
<line x1="1099.5" y1="225" x2="1099.5" y2="250" stroke="#d8bfd8" stroke-width="1" stroke-dasharray="3 3"/>
<line x1="1107.5" y1="211" x2="1107.5" y2="255" stroke="#d8bfd8" stroke-width="1" stroke-dasharray="3 3"/>
<line x1="1115.5" y1="211" x2="1115.5" y2="255" stroke="#d8bfd8" stroke-width="1" stroke-dasharray="3 3"/>
<line x1="1123.5" y1="211" x2="1123.5" y2="260" stroke="#d8bfd8" stroke-width="1" stroke-dasharray="3 3"/>
<line x1="1131.5" y1="211" x2="1131.5" y2="264" stroke="#d8bfd8" stroke-width="1" stroke-dasharray="3 3"/>
<line x1="1139.5" y1="211" x2="1139.5" y2="265" stroke="#d8bfd8" stroke-width="1" stroke-dasharray="3 3"/>
<line x1="1147.5" y1="211" x2="1147.5" y2="268" stroke="#d8bfd8" stroke-width="1" stroke-dasharray="3 3"/>
<line x1="1155.5" y1="211" x2="1155.5" y2="262" stroke="#d8bfd8" stroke-width="1" stroke-dasharray="3 3"/>
<line x1="1163.5" y1="211" x2="1163.5" y2="262" stroke="#d8bfd8" stroke-width="1" stroke-dasharray="3 3"/>
<line x1="1171.5" y1="211" x2="1171.5" y2="262" stroke="#d8bfd8" stroke-width="1" stroke-dasharray="3 3"/>
<line x1="1179.5" y1="211" x2="1179.5" y2="272" stroke="#d8bfd8" stroke-width="1" stroke-dasharray="3 3"/>
<line x1="1187.5" y1="211" x2="1187.5" y2="269" stroke="#d8bfd8" stroke-width="1" stroke-dasharray="3 3"/>
<line x1="1195.5" y1="211" x2="1195.5" y2="283" stroke="#d8bfd8" stroke-width="1" stroke-dasharray="3 3"/>
<line x1="1203.5" y1="211" x2="1203.5" y2="290" stroke="#d8bfd8" stroke-width="1" stroke-dasharray="3 3"/>
<line x1="1211.5" y1="211" x2="1211.5" y2="286" stroke="#d8bfd8" stroke-width="1" stroke-dasharray="3 3"/>
<line x1="1219.5" y1="211" x2="1219.5" y2="286" stroke="#d8bfd8" stroke-width="1" stroke-dasharray="3 3"/>
<line x1="1227.5" y1="211" x2="1227.5" y2="286" stroke="#d8bfd8" stroke-width="1" stroke-dasharray="3 3"/>
<line x1="1235.5" y1="211" x2="1235.5" y2="288" stroke="#d8bfd8" stroke-width="1" stroke-dasharray="3 3"/>
<line x1="1243.5" y1="211" x2="1243.5" y2="288" stroke="#d8bfd8" stroke-width="1" stroke-dasharray="3 3"/>
<line x1="1251.5" y1="211" x2="1251.5" y2="286" stroke="#d8bfd8" stroke-width="1" stroke-dasharray="3 3"/>
<line x1="1259.5" y1="211" x2="1259.5" y2="268" stroke="#d8bfd8" stroke-width="1" stroke-dasharray="3 3"/>
<line x1="1267.5" y1="211" x2="1267.5" y2="261" stroke="#d8bfd8" stroke-width="1" stroke-dasharray="3 3"/>
<line x1="1275.5" y1="211" x2="1275.5" y2="261" stroke="#d8bfd8" stroke-width="1" stroke-dasharray="3 3"/>
<line x1="1283.5" y1="211" x2="1283.5" y2="258" stroke="#d8bfd8" stroke-width="1" stroke-dasharray="3 3"/>
<line x1="1291.5" y1="211" x2="1291.5" y2="254" stroke="#d8bfd8" stroke-width="1" stroke-dasharray="3 3"/>
<line x1="1299.5" y1="211" x2="1299.5" y2="254" stroke="#d8bfd8" stroke-width="1" stroke-dasharray="3 3"/>
<line x1="1307.5" y1="218" x2="1307.5" y2="253" stroke="#d8bfd8" stroke-width="1" stroke-dasharray="3 3"/>
<line x1="1315.5" y1="224" x2="1315.5" y2="253" stroke="#d8bfd8" stroke-width="1" stroke-dasharray="3 3"/>
<line x1="1323.5" y1="224" x2="1323.5" y2="260" stroke="#d8bfd8" stroke-width="1" stroke-dasharray="3 3"/>
<line x1="1331.5" y1="224" x2="1331.5" y2="261" stroke="#d8bfd8" stroke-width="1" stroke-dasharray="3 3"/>
<line x1="1339.5" y1="224" x2="1339.5" y2="260" stroke="#d8bfd8" stroke-width="1" stroke-dasharray="3 3"/>
<line x1="1347.5" y1="242" x2="1347.5" y2="256" stroke="#d8bfd8" stroke-width="1" stroke-dasharray="3 3"/>
<line x1="1355.5" y1="243" x2="1355.5" y2="256" stroke="#d8bfd8" stroke-width="1" stroke-dasharray="3 3"/>
<line x1="1363.5" y1="274" x2="1363.5" y2="293" stroke="#d8bfd8" stroke-width="1" stroke-dasharray="3 3"/>
<line x1="1371.5" y1="282" x2="1371.5" y2="293" stroke="#d8bfd8" stroke-width="1" stroke-dasharray="3 3"/>
<line x1="1379.5" y1="282" x2="1379.5" y2="293" stroke="#d8bfd8" stroke-width="1" stroke-dasharray="3 3"/>
<line x1="1387.5" y1="282" x2="1387.5" y2="293" stroke="#d8bfd8" stroke-width="1" stroke-dasharray="3 3"/>
<line x1="1395.5" y1="282" x2="1395.5" y2="293" stroke="#d8bfd8" stroke-width="1" stroke-dasharray="3 3"/>
<line x1="1403.5" y1="282" x2="1403.5" y2="294" stroke="#d8bfd8" stroke-width="1" stroke-dasharray="3 3"/>
<line x1="1411.5" y1="282" x2="1411.5" y2="299" stroke="#d8bfd8" stroke-width="1" stroke-dasharray="3 3"/>
<line x1="1419.5" y1="282" x2="1419.5" y2="308" stroke="#d8bfd8" stroke-width="1" stroke-dasharray="3 3"/>
<line x1="1427.5" y1="282" x2="1427.5" y2="308" stroke="#d8bfd8" stroke-width="1" stroke-dasharray="3 3"/>
<line x1="1435.5" y1="282" x2="1435.5" y2="316" stroke="#d8bfd8" stroke-width="1" stroke-dasharray="3 3"/>
<line x1="1443.5" y1="282" x2="1443.5" y2="319" stroke="#d8bfd8" stroke-width="1" stroke-dasharray="3 3"/>
<line x1="1451.5" y1="289" x2="1451.5" y2="328" stroke="#d8bfd8" stroke-width="1" stroke-dasharray="3 3"/>
<line x1="1459.5" y1="306" x2="1459.5" y2="354" stroke="#d8bfd8" stroke-width="1" stroke-dasharray="3 3"/>
<line x1="1467.5" y1="312" x2="1467.5" y2="362" stroke="#d8bfd8" stroke-width="1" stroke-dasharray="3 3"/>
<line x1="1475.5" y1="312" x2="1475.5" y2="362" stroke="#d8bfd8" stroke-width="1" stroke-dasharray="3 3"/>
<line x1="1483.5" y1="312" x2="1483.5" y2="365" stroke="#d8bfd8" stroke-width="1" stroke-dasharray="3 3"/>
<line x1="1491.5" y1="312" x2="1491.5" y2="361" stroke="#d8bfd8" stroke-width="1" stroke-dasharray="3 3"/>
<line x1="1499.5" y1="312" x2="1499.5" y2="361" stroke="#d8bfd8" stroke-width="1" stroke-dasharray="3 3"/>
<line x1="1507.5" y1="312" x2="1507.5" y2="361" stroke="#d8bfd8" stroke-width="1" stroke-dasharray="3 3"/>
<line x1="1515.5" y1="312" x2="1515.5" y2="362" stroke="#d8bfd8" stroke-width="1" stroke-dasharray="3 3"/>
<line x1="1523.5" y1="312" x2="1523.5" y2="368" stroke="#d8bfd8" stroke-width="1" stroke-dasharray="3 3"/>
<line x1="1531.5" y1="350" x2="1531.5" y2="414" stroke="#d8bfd8" stroke-width="1" stroke-dasharray="3 3"/>
<line x1="1539.5" y1="356" x2="1539.5" y2="420" stroke="#d8bfd8" stroke-width="1" stroke-dasharray="3 3"/>
<line x1="1547.5" y1="358" x2="1547.5" y2="425" stroke="#d8bfd8" stroke-width="1" stroke-dasharray="3 3"/>
<line x1="1555.5" y1="358" x2="1555.5" y2="428" stroke="#d8bfd8" stroke-width="1" stroke-dasharray="3 3"/>
<line x1="1563.5" y1="358" x2="1563.5" y2="431" stroke="#d8bfd8" stroke-width="1" stroke-dasharray="3 3"/>
<line x1="1571.5" y1="358" x2="1571.5" y2="445" stroke="#d8bfd8" stroke-width="1" stroke-dasharray="3 3"/>
<line x1="1579.5" y1="358" x2="1579.5" y2="454" stroke="#d8bfd8" stroke-width="1" stroke-dasharray="3 3"/>
<line x1="1587.5" y1="358" x2="1587.5" y2="454" stroke="#d8bfd8" stroke-width="1" stroke-dasharray="3 3"/>
<line x1="1595.5" y1="358" x2="1595.5" y2="441" stroke="#d8bfd8" stroke-width="1" stroke-dasharray="3 3"/>
<line x1="1603.5" y1="372" x2="1603.5" y2="428" stroke="#d8bfd8" stroke-width="1" stroke-dasharray="3 3"/>
<line x1="1611.5" y1="378" x2="1611.5" y2="423" stroke="#d8bfd8" stroke-width="1" stroke-dasharray="3 3"/>
<line x1="1619.5" y1="378" x2="1619.5" y2="423" stroke="#d8bfd8" stroke-width="1" stroke-dasharray="3 3"/>
<line x1="1627.5" y1="378" x2="1627.5" y2="423" stroke="#d8bfd8" stroke-width="1" stroke-dasharray="3 3"/>
<line x1="1635.5" y1="378" x2="1635.5" y2="423" stroke="#d8bfd8" stroke-width="1" stroke-dasharray="3 3"/>
<line x1="1643.5" y1="378" x2="1643.5" y2="423" stroke="#d8bfd8" stroke-width="1" stroke-dasharray="3 3"/>
<line x1="1651.5" y1="378" x2="1651.5" y2="415" stroke="#d8bfd8" stroke-width="1" stroke-dasharray="3 3"/>
<polyline points="3.5,748.1 11.5,749.6 19.5,752.3 27.5,753.3 35.5,754.2 43.5,755.1 51.5,757.1 59.5,759.5 67.5,762.2 75.5,765.7 83.5,767.6 91.5,768.3 99.5,769.0 107.5,769.6 115.5,764.0 123.5,759.5 131.5,752.9 139.5,752.5 147.5,752.5 155.5,752.5 163.5,749.6 171.5,745.2 179.5,740.8 187.5,736.1 195.5,730.9 203.5,724.8 211.5,717.4 219.5,714.2 227.5,713.0 235.5,713.0 243.5,719.6 251.5,722.1 259.5,725.0 267.5,730.0 275.5,730.8 283.5,730.0 291.5,726.5 299.5,717.2 307.5,703.5 315.5,691.7 323.5,690.9 331.5,690.8 339.5,686.8 347.5,686.8 355.5,683.0 363.5,684.0 371.5,692.0 379.5,692.0 387.5,688.0 395.5,675.2 403.5,664.2 411.5,664.2 419.5,659.8 427.5,629.0 435.5,619.2 443.5,594.2 451.5,574.0 459.5,563.2 467.5,560.8 475.5,559.8 483.5,551.8 491.5,539.2 499.5,511.2 507.5,495.2 515.5,495.2 523.5,495.2 531.5,495.2 539.5,487.8 547.5,485.2 555.5,450.0 563.5,444.5 571.5,438.8 579.5,451.5 587.5,453.0 595.5,445.0 603.5,443.5 611.5,443.5 619.5,443.5 627.5,443.5 635.5,444.5 643.5,435.0 651.5,434.5 659.5,434.5 667.5,427.8 675.5,432.5 683.5,434.8 691.5,433.8 699.5,432.0 707.5,425.2 715.5,424.8 723.5,424.8 731.5,424.8 739.5,414.8 747.5,413.8 755.5,398.2 763.5,400.8 771.5,390.2 779.5,363.8 787.5,340.8 795.5,323.8 803.5,313.8 811.5,312.0 819.5,299.5 827.5,287.8 835.5,268.5 843.5,250.0 851.5,242.0 859.5,236.8 867.5,231.8 875.5,241.2 883.5,241.2 891.5,236.2 899.5,223.2 907.5,223.2 915.5,223.2 923.5,223.2 931.5,205.8 939.5,190.5 947.5,177.0 955.5,155.5 963.5,145.0 971.5,123.2 979.5,123.2 987.5,123.2 995.5,123.2 1003.5,118.8 1011.5,118.8 1019.5,118.8 1027.5,136.0 1035.5,149.5 1043.5,154.2 1051.5,157.2 1059.5,207.8 1067.5,217.2 1075.5,217.5 1083.5,242.2 1091.5,250.0 1099.5,250.0 1107.5,254.8 1115.5,254.8 1123.5,259.8 1131.5,263.8 1139.5,265.0 1147.5,267.5 1155.5,262.0 1163.5,262.0 1171.5,262.0 1179.5,271.5 1187.5,268.8 1195.5,282.8 1203.5,290.0 1211.5,286.0 1219.5,285.8 1227.5,286.5 1235.5,288.0 1243.5,288.0 1251.5,285.5 1259.5,268.0 1267.5,261.0 1275.5,261.0 1283.5,258.0 1291.5,254.0 1299.5,254.0 1307.5,252.8 1315.5,252.8 1323.5,260.2 1331.5,261.2 1339.5,259.5 1347.5,256.0 1355.5,256.0 1363.5,293.0 1371.5,293.0 1379.5,293.0 1387.5,293.0 1395.5,293.0 1403.5,293.8 1411.5,298.8 1419.5,308.5 1427.5,308.5 1435.5,316.0 1443.5,319.0 1451.5,328.2 1459.5,354.0 1467.5,362.0 1475.5,362.0 1483.5,365.2 1491.5,360.8 1499.5,360.8 1507.5,360.8 1515.5,361.5 1523.5,367.5 1531.5,414.2 1539.5,420.2 1547.5,425.0 1555.5,428.2 1563.5,431.0 1571.5,444.8 1579.5,453.8 1587.5,453.8 1595.5,440.8 1603.5,427.8 1611.5,423.0 1619.5,423.0 1627.5,423.0 1635.5,423.0 1643.5,423.0 1651.5,415.0" fill="none" stroke="#f4a460" stroke-width="1" stroke-dasharray="3 3"/>
<polyline points="19.5,760.0 27.5,760.0 35.5,760.0 43.5,760.1 51.5,761.7 59.5,769.8 67.5,776.7 75.5,777.0 83.5,777.0 91.5,774.5 99.5,772.0 107.5,772.0 115.5,772.0 123.5,772.0 131.5,772.0 139.5,772.0 147.5,772.0 155.5,772.0 163.5,772.0 171.5,772.0 179.5,772.0 187.5,772.0 195.5,772.0 203.5,748.3 211.5,742.3 219.5,737.9 227.5,737.1 235.5,737.0 243.5,737.0 251.5,737.0 259.5,737.0 267.5,737.0 275.5,737.0 283.5,737.0 291.5,737.0 299.5,734.5 307.5,722.0 315.5,722.0 323.5,722.0 331.5,722.0 339.5,722.0 347.5,722.0 355.5,722.0 363.5,722.0 371.5,722.0 379.5,722.0 387.5,722.0 395.5,707.8 403.5,695.3 411.5,690.8 419.5,690.0 427.5,679.2 435.5,667.7 443.5,648.2 451.5,635.3 459.5,622.8 467.5,621.7 475.5,621.4 483.5,621.0 491.5,613.5 499.5,595.3 507.5,566.0 515.5,566.0 523.5,565.5 531.5,565.5 539.5,565.5 547.5,565.5 555.5,565.5 563.5,565.5 571.5,565.5 579.5,563.5 587.5,563.5 595.5,540.0 603.5,537.5 611.5,536.0 619.5,534.0 627.5,534.0 635.5,534.0 643.5,534.0 651.5,534.0 659.5,534.0 667.5,534.0 675.5,534.0 683.5,534.0 691.5,534.0 699.5,534.0 707.5,519.0 715.5,514.0 723.5,498.5 731.5,483.0 739.5,478.5 747.5,473.5 755.5,471.5 763.5,455.5 771.5,442.0 779.5,415.5 787.5,392.5 795.5,375.5 803.5,365.5 811.5,365.5 819.5,357.0 827.5,357.0 835.5,330.5 843.5,330.5 851.5,330.5 859.5,330.5 867.5,330.5 875.5,330.5 883.5,330.5 891.5,325.5 899.5,312.5 907.5,312.5 915.5,312.5 923.5,293.5 931.5,292.5 939.5,292.5 947.5,292.5 955.5,291.0 963.5,281.5 971.5,260.5 979.5,257.0 987.5,257.0 995.5,257.0 1003.5,257.0 1011.5,257.0 1019.5,241.0 1027.5,239.0 1035.5,233.0 1043.5,233.0 1051.5,233.0 1059.5,233.0 1067.5,233.0 1075.5,233.0 1083.5,233.0 1091.5,233.0 1099.5,225.0 1107.5,211.0 1115.5,211.0 1123.5,211.0 1131.5,211.0 1139.5,211.0 1147.5,211.0 1155.5,211.0 1163.5,211.0 1171.5,211.0 1179.5,211.0 1187.5,211.0 1195.5,211.0 1203.5,211.0 1211.5,211.0 1219.5,211.0 1227.5,211.0 1235.5,211.0 1243.5,211.0 1251.5,211.0 1259.5,211.0 1267.5,211.0 1275.5,211.0 1283.5,211.0 1291.5,211.0 1299.5,211.0 1307.5,218.5 1315.5,223.5 1323.5,223.5 1331.5,223.5 1339.5,223.5 1347.5,242.5 1355.5,243.0 1363.5,273.5 1371.5,282.5 1379.5,282.5 1387.5,282.5 1395.5,282.5 1403.5,282.5 1411.5,282.5 1419.5,282.5 1427.5,282.5 1435.5,282.5 1443.5,282.5 1451.5,289.0 1459.5,305.5 1467.5,311.5 1475.5,311.5 1483.5,311.5 1491.5,311.5 1499.5,311.5 1507.5,311.5 1515.5,311.5 1523.5,312.5 1531.5,349.5 1539.5,355.5 1547.5,357.5 1555.5,357.5 1563.5,357.5 1571.5,357.5 1579.5,357.5 1587.5,357.5 1595.5,357.5 1603.5,372.5 1611.5,378.5 1619.5,378.5 1627.5,378.5 1635.5,378.5 1643.5,378.5 1651.5,378.5" fill="none" stroke="#d8bfd8" stroke-width="1" stroke-dasharray="3 3"/>
</g>
<g id="cloudH4">
<line x1="3.5" y1="727" x2="3.5" y2="768" stroke="#ff0000" stroke-width="1" stroke-dasharray="3 3"/>
<line x1="11.5" y1="727" x2="11.5" y2="768" stroke="#ff0000" stroke-width="1" stroke-dasharray="3 3"/>
<line x1="19.5" y1="727" x2="19.5" y2="768" stroke="#ff0000" stroke-width="1" stroke-dasharray="3 3"/>
<line x1="27.5" y1="727" x2="27.5" y2="768" stroke="#ff0000" stroke-width="1" stroke-dasharray="3 3"/>
<line x1="35.5" y1="727" x2="35.5" y2="768" stroke="#ff0000" stroke-width="1" stroke-dasharray="3 3"/>
<line x1="43.5" y1="727" x2="43.5" y2="758" stroke="#ff0000" stroke-width="1" stroke-dasharray="3 3"/>
<line x1="51.5" y1="727" x2="51.5" y2="758" stroke="#ff0000" stroke-width="1" stroke-dasharray="3 3"/>
<line x1="59.5" y1="727" x2="59.5" y2="758" stroke="#ff0000" stroke-width="1" stroke-dasharray="3 3"/>
<line x1="67.5" y1="727" x2="67.5" y2="758" stroke="#ff0000" stroke-width="1" stroke-dasharray="3 3"/>
<line x1="75.5" y1="737" x2="75.5" y2="752" stroke="#ff0000" stroke-width="1" stroke-dasharray="3 3"/>
<line x1="83.5" y1="737" x2="83.5" y2="752" stroke="#ff0000" stroke-width="1" stroke-dasharray="3 3"/>
<line x1="91.5" y1="737" x2="91.5" y2="752" stroke="#ff0000" stroke-width="1" stroke-dasharray="3 3"/>
<line x1="99.5" y1="737" x2="99.5" y2="752" stroke="#ff0000" stroke-width="1" stroke-dasharray="3 3"/>
<line x1="107.5" y1="716" x2="107.5" y2="752" stroke="#0000ff" stroke-width="1" stroke-dasharray="3 3"/>
<line x1="115.5" y1="716" x2="115.5" y2="752" stroke="#0000ff" stroke-width="1" stroke-dasharray="3 3"/>
<line x1="123.5" y1="716" x2="123.5" y2="752" stroke="#0000ff" stroke-width="1" stroke-dasharray="3 3"/>
<line x1="131.5" y1="716" x2="131.5" y2="752" stroke="#0000ff" stroke-width="1" stroke-dasharray="3 3"/>
<line x1="139.5" y1="713" x2="139.5" y2="752" stroke="#0000ff" stroke-width="1" stroke-dasharray="3 3"/>
<line x1="147.5" y1="713" x2="147.5" y2="752" stroke="#0000ff" stroke-width="1" stroke-dasharray="3 3"/>
<line x1="155.5" y1="713" x2="155.5" y2="752" stroke="#0000ff" stroke-width="1" stroke-dasharray="3 3"/>
<line x1="163.5" y1="713" x2="163.5" y2="752" stroke="#0000ff" stroke-width="1" stroke-dasharray="3 3"/>
<line x1="171.5" y1="713" x2="171.5" y2="766" stroke="#0000ff" stroke-width="1" stroke-dasharray="3 3"/>
<line x1="179.5" y1="713" x2="179.5" y2="766" stroke="#0000ff" stroke-width="1" stroke-dasharray="3 3"/>
<line x1="187.5" y1="713" x2="187.5" y2="766" stroke="#0000ff" stroke-width="1" stroke-dasharray="3 3"/>
<line x1="195.5" y1="713" x2="195.5" y2="766" stroke="#0000ff" stroke-width="1" stroke-dasharray="3 3"/>
<line x1="203.5" y1="719" x2="203.5" y2="786" stroke="#0000ff" stroke-width="1" stroke-dasharray="3 3"/>
<line x1="211.5" y1="719" x2="211.5" y2="786" stroke="#0000ff" stroke-width="1" stroke-dasharray="3 3"/>
<line x1="219.5" y1="719" x2="219.5" y2="786" stroke="#0000ff" stroke-width="1" stroke-dasharray="3 3"/>
<line x1="227.5" y1="719" x2="227.5" y2="786" stroke="#0000ff" stroke-width="1" stroke-dasharray="3 3"/>
<line x1="235.5" y1="730" x2="235.5" y2="786" stroke="#0000ff" stroke-width="1" stroke-dasharray="3 3"/>
<line x1="243.5" y1="730" x2="243.5" y2="786" stroke="#0000ff" stroke-width="1" stroke-dasharray="3 3"/>
<line x1="251.5" y1="730" x2="251.5" y2="786" stroke="#0000ff" stroke-width="1" stroke-dasharray="3 3"/>
<line x1="259.5" y1="730" x2="259.5" y2="786" stroke="#0000ff" stroke-width="1" stroke-dasharray="3 3"/>
<line x1="267.5" y1="740" x2="267.5" y2="786" stroke="#0000ff" stroke-width="1" stroke-dasharray="3 3"/>
<line x1="275.5" y1="740" x2="275.5" y2="786" stroke="#0000ff" stroke-width="1" stroke-dasharray="3 3"/>
<line x1="283.5" y1="740" x2="283.5" y2="786" stroke="#0000ff" stroke-width="1" stroke-dasharray="3 3"/>
<line x1="291.5" y1="740" x2="291.5" y2="786" stroke="#0000ff" stroke-width="1" stroke-dasharray="3 3"/>
<line x1="299.5" y1="740" x2="299.5" y2="786" stroke="#0000ff" stroke-width="1" stroke-dasharray="3 3"/>
<line x1="307.5" y1="740" x2="307.5" y2="786" stroke="#0000ff" stroke-width="1" stroke-dasharray="3 3"/>
<line x1="315.5" y1="740" x2="315.5" y2="786" stroke="#0000ff" stroke-width="1" stroke-dasharray="3 3"/>
<line x1="323.5" y1="740" x2="323.5" y2="786" stroke="#0000ff" stroke-width="1" stroke-dasharray="3 3"/>
<line x1="331.5" y1="740" x2="331.5" y2="786" stroke="#0000ff" stroke-width="1" stroke-dasharray="3 3"/>
<line x1="339.5" y1="740" x2="339.5" y2="786" stroke="#0000ff" stroke-width="1" stroke-dasharray="3 3"/>
<line x1="347.5" y1="740" x2="347.5" y2="786" stroke="#0000ff" stroke-width="1" stroke-dasharray="3 3"/>
<line x1="355.5" y1="740" x2="355.5" y2="786" stroke="#0000ff" stroke-width="1" stroke-dasharray="3 3"/>
<line x1="363.5" y1="745" x2="363.5" y2="786" stroke="#0000ff" stroke-width="1" stroke-dasharray="3 3"/>
<line x1="371.5" y1="745" x2="371.5" y2="786" stroke="#0000ff" stroke-width="1" stroke-dasharray="3 3"/>
<line x1="379.5" y1="745" x2="379.5" y2="786" stroke="#0000ff" stroke-width="1" stroke-dasharray="3 3"/>
<line x1="387.5" y1="745" x2="387.5" y2="786" stroke="#0000ff" stroke-width="1" stroke-dasharray="3 3"/>
<line x1="395.5" y1="736" x2="395.5" y2="786" stroke="#0000ff" stroke-width="1" stroke-dasharray="3 3"/>
<line x1="403.5" y1="736" x2="403.5" y2="786" stroke="#0000ff" stroke-width="1" stroke-dasharray="3 3"/>
<line x1="411.5" y1="736" x2="411.5" y2="786" stroke="#0000ff" stroke-width="1" stroke-dasharray="3 3"/>
<line x1="419.5" y1="736" x2="419.5" y2="786" stroke="#0000ff" stroke-width="1" stroke-dasharray="3 3"/>
<line x1="427.5" y1="745" x2="427.5" y2="786" stroke="#0000ff" stroke-width="1" stroke-dasharray="3 3"/>
<line x1="435.5" y1="745" x2="435.5" y2="786" stroke="#0000ff" stroke-width="1" stroke-dasharray="3 3"/>
<line x1="443.5" y1="745" x2="443.5" y2="786" stroke="#0000ff" stroke-width="1" stroke-dasharray="3 3"/>
<line x1="451.5" y1="745" x2="451.5" y2="786" stroke="#0000ff" stroke-width="1" stroke-dasharray="3 3"/>
<line x1="459.5" y1="748" x2="459.5" y2="786" stroke="#0000ff" stroke-width="1" stroke-dasharray="3 3"/>
<line x1="467.5" y1="748" x2="467.5" y2="786" stroke="#0000ff" stroke-width="1" stroke-dasharray="3 3"/>
<line x1="475.5" y1="748" x2="475.5" y2="786" stroke="#0000ff" stroke-width="1" stroke-dasharray="3 3"/>
<line x1="483.5" y1="748" x2="483.5" y2="786" stroke="#0000ff" stroke-width="1" stroke-dasharray="3 3"/>
<line x1="491.5" y1="745" x2="491.5" y2="786" stroke="#0000ff" stroke-width="1" stroke-dasharray="3 3"/>
<line x1="499.5" y1="745" x2="499.5" y2="786" stroke="#0000ff" stroke-width="1" stroke-dasharray="3 3"/>
<line x1="507.5" y1="745" x2="507.5" y2="786" stroke="#0000ff" stroke-width="1" stroke-dasharray="3 3"/>
<line x1="515.5" y1="745" x2="515.5" y2="786" stroke="#0000ff" stroke-width="1" stroke-dasharray="3 3"/>
<line x1="523.5" y1="745" x2="523.5" y2="773" stroke="#0000ff" stroke-width="1" stroke-dasharray="3 3"/>
<line x1="531.5" y1="745" x2="531.5" y2="773" stroke="#0000ff" stroke-width="1" stroke-dasharray="3 3"/>
<line x1="539.5" y1="745" x2="539.5" y2="773" stroke="#0000ff" stroke-width="1" stroke-dasharray="3 3"/>
<line x1="547.5" y1="745" x2="547.5" y2="773" stroke="#0000ff" stroke-width="1" stroke-dasharray="3 3"/>
<line x1="555.5" y1="745" x2="555.5" y2="771" stroke="#0000ff" stroke-width="1" stroke-dasharray="3 3"/>
<line x1="563.5" y1="745" x2="563.5" y2="771" stroke="#0000ff" stroke-width="1" stroke-dasharray="3 3"/>
<line x1="571.5" y1="745" x2="571.5" y2="771" stroke="#0000ff" stroke-width="1" stroke-dasharray="3 3"/>
<line x1="579.5" y1="745" x2="579.5" y2="771" stroke="#0000ff" stroke-width="1" stroke-dasharray="3 3"/>
<line x1="587.5" y1="737" x2="587.5" y2="771" stroke="#0000ff" stroke-width="1" stroke-dasharray="3 3"/>
<line x1="595.5" y1="737" x2="595.5" y2="771" stroke="#0000ff" stroke-width="1" stroke-dasharray="3 3"/>
<line x1="603.5" y1="737" x2="603.5" y2="771" stroke="#0000ff" stroke-width="1" stroke-dasharray="3 3"/>
<line x1="611.5" y1="737" x2="611.5" y2="771" stroke="#0000ff" stroke-width="1" stroke-dasharray="3 3"/>
<line x1="619.5" y1="737" x2="619.5" y2="763" stroke="#0000ff" stroke-width="1" stroke-dasharray="3 3"/>
<line x1="627.5" y1="737" x2="627.5" y2="763" stroke="#0000ff" stroke-width="1" stroke-dasharray="3 3"/>
<line x1="635.5" y1="737" x2="635.5" y2="763" stroke="#0000ff" stroke-width="1" stroke-dasharray="3 3"/>
<line x1="643.5" y1="737" x2="643.5" y2="763" stroke="#0000ff" stroke-width="1" stroke-dasharray="3 3"/>
<line x1="651.5" y1="737" x2="651.5" y2="763" stroke="#0000ff" stroke-width="1" stroke-dasharray="3 3"/>
<line x1="659.5" y1="737" x2="659.5" y2="763" stroke="#0000ff" stroke-width="1" stroke-dasharray="3 3"/>
<line x1="667.5" y1="737" x2="667.5" y2="763" stroke="#0000ff" stroke-width="1" stroke-dasharray="3 3"/>
<line x1="675.5" y1="737" x2="675.5" y2="763" stroke="#0000ff" stroke-width="1" stroke-dasharray="3 3"/>
<line x1="683.5" y1="727" x2="683.5" y2="763" stroke="#0000ff" stroke-width="1" stroke-dasharray="3 3"/>
<line x1="691.5" y1="727" x2="691.5" y2="763" stroke="#0000ff" stroke-width="1" stroke-dasharray="3 3"/>
<line x1="699.5" y1="727" x2="699.5" y2="763" stroke="#0000ff" stroke-width="1" stroke-dasharray="3 3"/>
<line x1="707.5" y1="727" x2="707.5" y2="763" stroke="#0000ff" stroke-width="1" stroke-dasharray="3 3"/>
<line x1="715.5" y1="727" x2="715.5" y2="763" stroke="#0000ff" stroke-width="1" stroke-dasharray="3 3"/>
<line x1="723.5" y1="727" x2="723.5" y2="763" stroke="#0000ff" stroke-width="1" stroke-dasharray="3 3"/>
<line x1="731.5" y1="727" x2="731.5" y2="763" stroke="#0000ff" stroke-width="1" stroke-dasharray="3 3"/>
<line x1="739.5" y1="727" x2="739.5" y2="763" stroke="#0000ff" stroke-width="1" stroke-dasharray="3 3"/>
<line x1="747.5" y1="727" x2="747.5" y2="763" stroke="#0000ff" stroke-width="1" stroke-dasharray="3 3"/>
<line x1="755.5" y1="727" x2="755.5" y2="763" stroke="#0000ff" stroke-width="1" stroke-dasharray="3 3"/>
<line x1="763.5" y1="727" x2="763.5" y2="763" stroke="#0000ff" stroke-width="1" stroke-dasharray="3 3"/>
<line x1="771.5" y1="727" x2="771.5" y2="763" stroke="#0000ff" stroke-width="1" stroke-dasharray="3 3"/>
<line x1="779.5" y1="723" x2="779.5" y2="763" stroke="#0000ff" stroke-width="1" stroke-dasharray="3 3"/>
<line x1="787.5" y1="723" x2="787.5" y2="763" stroke="#0000ff" stroke-width="1" stroke-dasharray="3 3"/>
<line x1="795.5" y1="723" x2="795.5" y2="763" stroke="#0000ff" stroke-width="1" stroke-dasharray="3 3"/>
<line x1="803.5" y1="723" x2="803.5" y2="763" stroke="#0000ff" stroke-width="1" stroke-dasharray="3 3"/>
<line x1="811.5" y1="718" x2="811.5" y2="763" stroke="#0000ff" stroke-width="1" stroke-dasharray="3 3"/>
<line x1="819.5" y1="718" x2="819.5" y2="763" stroke="#0000ff" stroke-width="1" stroke-dasharray="3 3"/>
<line x1="827.5" y1="718" x2="827.5" y2="763" stroke="#0000ff" stroke-width="1" stroke-dasharray="3 3"/>
<line x1="835.5" y1="718" x2="835.5" y2="763" stroke="#0000ff" stroke-width="1" stroke-dasharray="3 3"/>
<line x1="843.5" y1="723" x2="843.5" y2="763" stroke="#0000ff" stroke-width="1" stroke-dasharray="3 3"/>
<line x1="851.5" y1="723" x2="851.5" y2="763" stroke="#0000ff" stroke-width="1" stroke-dasharray="3 3"/>
<line x1="859.5" y1="723" x2="859.5" y2="763" stroke="#0000ff" stroke-width="1" stroke-dasharray="3 3"/>
<line x1="867.5" y1="723" x2="867.5" y2="763" stroke="#0000ff" stroke-width="1" stroke-dasharray="3 3"/>
<line x1="875.5" y1="713" x2="875.5" y2="763" stroke="#0000ff" stroke-width="1" stroke-dasharray="3 3"/>
<line x1="883.5" y1="713" x2="883.5" y2="763" stroke="#0000ff" stroke-width="1" stroke-dasharray="3 3"/>
<line x1="891.5" y1="713" x2="891.5" y2="763" stroke="#0000ff" stroke-width="1" stroke-dasharray="3 3"/>
<line x1="899.5" y1="713" x2="899.5" y2="763" stroke="#0000ff" stroke-width="1" stroke-dasharray="3 3"/>
<line x1="907.5" y1="684" x2="907.5" y2="752" stroke="#0000ff" stroke-width="1" stroke-dasharray="3 3"/>
<line x1="915.5" y1="684" x2="915.5" y2="752" stroke="#0000ff" stroke-width="1" stroke-dasharray="3 3"/>
<line x1="923.5" y1="684" x2="923.5" y2="752" stroke="#0000ff" stroke-width="1" stroke-dasharray="3 3"/>
<line x1="931.5" y1="684" x2="931.5" y2="752" stroke="#0000ff" stroke-width="1" stroke-dasharray="3 3"/>
<line x1="939.5" y1="640" x2="939.5" y2="709" stroke="#0000ff" stroke-width="1" stroke-dasharray="3 3"/>
<line x1="947.5" y1="640" x2="947.5" y2="709" stroke="#0000ff" stroke-width="1" stroke-dasharray="3 3"/>
<line x1="955.5" y1="640" x2="955.5" y2="709" stroke="#0000ff" stroke-width="1" stroke-dasharray="3 3"/>
<line x1="963.5" y1="640" x2="963.5" y2="709" stroke="#0000ff" stroke-width="1" stroke-dasharray="3 3"/>
<line x1="971.5" y1="617" x2="971.5" y2="698" stroke="#0000ff" stroke-width="1" stroke-dasharray="3 3"/>
<line x1="979.5" y1="617" x2="979.5" y2="698" stroke="#0000ff" stroke-width="1" stroke-dasharray="3 3"/>
<line x1="987.5" y1="617" x2="987.5" y2="698" stroke="#0000ff" stroke-width="1" stroke-dasharray="3 3"/>
<line x1="995.5" y1="617" x2="995.5" y2="698" stroke="#0000ff" stroke-width="1" stroke-dasharray="3 3"/>
<line x1="1003.5" y1="572" x2="1003.5" y2="653" stroke="#0000ff" stroke-width="1" stroke-dasharray="3 3"/>
<line x1="1011.5" y1="572" x2="1011.5" y2="653" stroke="#0000ff" stroke-width="1" stroke-dasharray="3 3"/>
<line x1="1019.5" y1="572" x2="1019.5" y2="653" stroke="#0000ff" stroke-width="1" stroke-dasharray="3 3"/>
<line x1="1027.5" y1="572" x2="1027.5" y2="653" stroke="#0000ff" stroke-width="1" stroke-dasharray="3 3"/>
<line x1="1035.5" y1="564" x2="1035.5" y2="653" stroke="#0000ff" stroke-width="1" stroke-dasharray="3 3"/>
<line x1="1043.5" y1="564" x2="1043.5" y2="653" stroke="#0000ff" stroke-width="1" stroke-dasharray="3 3"/>
<line x1="1051.5" y1="564" x2="1051.5" y2="653" stroke="#0000ff" stroke-width="1" stroke-dasharray="3 3"/>
<line x1="1059.5" y1="564" x2="1059.5" y2="653" stroke="#0000ff" stroke-width="1" stroke-dasharray="3 3"/>
<line x1="1067.5" y1="562" x2="1067.5" y2="606" stroke="#0000ff" stroke-width="1" stroke-dasharray="3 3"/>
<line x1="1075.5" y1="562" x2="1075.5" y2="606" stroke="#0000ff" stroke-width="1" stroke-dasharray="3 3"/>
<line x1="1083.5" y1="562" x2="1083.5" y2="606" stroke="#0000ff" stroke-width="1" stroke-dasharray="3 3"/>
<line x1="1091.5" y1="562" x2="1091.5" y2="606" stroke="#0000ff" stroke-width="1" stroke-dasharray="3 3"/>
<line x1="1099.5" y1="532" x2="1099.5" y2="606" stroke="#0000ff" stroke-width="1" stroke-dasharray="3 3"/>
<line x1="1107.5" y1="532" x2="1107.5" y2="606" stroke="#0000ff" stroke-width="1" stroke-dasharray="3 3"/>
<line x1="1115.5" y1="532" x2="1115.5" y2="606" stroke="#0000ff" stroke-width="1" stroke-dasharray="3 3"/>
<line x1="1123.5" y1="532" x2="1123.5" y2="606" stroke="#0000ff" stroke-width="1" stroke-dasharray="3 3"/>
<line x1="1131.5" y1="519" x2="1131.5" y2="606" stroke="#0000ff" stroke-width="1" stroke-dasharray="3 3"/>
<line x1="1139.5" y1="519" x2="1139.5" y2="606" stroke="#0000ff" stroke-width="1" stroke-dasharray="3 3"/>
<line x1="1147.5" y1="519" x2="1147.5" y2="606" stroke="#0000ff" stroke-width="1" stroke-dasharray="3 3"/>
<line x1="1155.5" y1="519" x2="1155.5" y2="606" stroke="#0000ff" stroke-width="1" stroke-dasharray="3 3"/>
<line x1="1163.5" y1="517" x2="1163.5" y2="606" stroke="#0000ff" stroke-width="1" stroke-dasharray="3 3"/>
<line x1="1171.5" y1="517" x2="1171.5" y2="606" stroke="#0000ff" stroke-width="1" stroke-dasharray="3 3"/>
<line x1="1179.5" y1="517" x2="1179.5" y2="606" stroke="#0000ff" stroke-width="1" stroke-dasharray="3 3"/>
<line x1="1187.5" y1="517" x2="1187.5" y2="606" stroke="#0000ff" stroke-width="1" stroke-dasharray="3 3"/>
<line x1="1195.5" y1="517" x2="1195.5" y2="606" stroke="#0000ff" stroke-width="1" stroke-dasharray="3 3"/>
<line x1="1203.5" y1="517" x2="1203.5" y2="606" stroke="#0000ff" stroke-width="1" stroke-dasharray="3 3"/>
<line x1="1211.5" y1="517" x2="1211.5" y2="606" stroke="#0000ff" stroke-width="1" stroke-dasharray="3 3"/>
<line x1="1219.5" y1="517" x2="1219.5" y2="606" stroke="#0000ff" stroke-width="1" stroke-dasharray="3 3"/>
<line x1="1227.5" y1="504" x2="1227.5" y2="606" stroke="#0000ff" stroke-width="1" stroke-dasharray="3 3"/>
<line x1="1235.5" y1="504" x2="1235.5" y2="606" stroke="#0000ff" stroke-width="1" stroke-dasharray="3 3"/>
<line x1="1243.5" y1="504" x2="1243.5" y2="606" stroke="#0000ff" stroke-width="1" stroke-dasharray="3 3"/>
<line x1="1251.5" y1="504" x2="1251.5" y2="606" stroke="#0000ff" stroke-width="1" stroke-dasharray="3 3"/>
<line x1="1259.5" y1="467" x2="1259.5" y2="569" stroke="#0000ff" stroke-width="1" stroke-dasharray="3 3"/>
<line x1="1267.5" y1="467" x2="1267.5" y2="569" stroke="#0000ff" stroke-width="1" stroke-dasharray="3 3"/>
<line x1="1275.5" y1="467" x2="1275.5" y2="569" stroke="#0000ff" stroke-width="1" stroke-dasharray="3 3"/>
<line x1="1283.5" y1="467" x2="1283.5" y2="569" stroke="#0000ff" stroke-width="1" stroke-dasharray="3 3"/>
<line x1="1291.5" y1="403" x2="1291.5" y2="519" stroke="#0000ff" stroke-width="1" stroke-dasharray="3 3"/>
<line x1="1299.5" y1="403" x2="1299.5" y2="519" stroke="#0000ff" stroke-width="1" stroke-dasharray="3 3"/>
<line x1="1307.5" y1="403" x2="1307.5" y2="519" stroke="#0000ff" stroke-width="1" stroke-dasharray="3 3"/>
<line x1="1315.5" y1="403" x2="1315.5" y2="519" stroke="#0000ff" stroke-width="1" stroke-dasharray="3 3"/>
<line x1="1323.5" y1="388" x2="1323.5" y2="503" stroke="#0000ff" stroke-width="1" stroke-dasharray="3 3"/>
<line x1="1331.5" y1="388" x2="1331.5" y2="503" stroke="#0000ff" stroke-width="1" stroke-dasharray="3 3"/>
<line x1="1339.5" y1="388" x2="1339.5" y2="503" stroke="#0000ff" stroke-width="1" stroke-dasharray="3 3"/>
<line x1="1347.5" y1="388" x2="1347.5" y2="503" stroke="#0000ff" stroke-width="1" stroke-dasharray="3 3"/>
<line x1="1355.5" y1="378" x2="1355.5" y2="503" stroke="#0000ff" stroke-width="1" stroke-dasharray="3 3"/>
<line x1="1363.5" y1="378" x2="1363.5" y2="503" stroke="#0000ff" stroke-width="1" stroke-dasharray="3 3"/>
<line x1="1371.5" y1="378" x2="1371.5" y2="503" stroke="#0000ff" stroke-width="1" stroke-dasharray="3 3"/>
<line x1="1379.5" y1="378" x2="1379.5" y2="503" stroke="#0000ff" stroke-width="1" stroke-dasharray="3 3"/>
<line x1="1387.5" y1="359" x2="1387.5" y2="485" stroke="#0000ff" stroke-width="1" stroke-dasharray="3 3"/>
<line x1="1395.5" y1="359" x2="1395.5" y2="485" stroke="#0000ff" stroke-width="1" stroke-dasharray="3 3"/>
<line x1="1403.5" y1="359" x2="1403.5" y2="485" stroke="#0000ff" stroke-width="1" stroke-dasharray="3 3"/>
<line x1="1411.5" y1="359" x2="1411.5" y2="485" stroke="#0000ff" stroke-width="1" stroke-dasharray="3 3"/>
<line x1="1419.5" y1="343" x2="1419.5" y2="485" stroke="#0000ff" stroke-width="1" stroke-dasharray="3 3"/>
<line x1="1427.5" y1="343" x2="1427.5" y2="485" stroke="#0000ff" stroke-width="1" stroke-dasharray="3 3"/>
<line x1="1435.5" y1="343" x2="1435.5" y2="485" stroke="#0000ff" stroke-width="1" stroke-dasharray="3 3"/>
<line x1="1443.5" y1="343" x2="1443.5" y2="485" stroke="#0000ff" stroke-width="1" stroke-dasharray="3 3"/>
<line x1="1451.5" y1="310" x2="1451.5" y2="452" stroke="#0000ff" stroke-width="1" stroke-dasharray="3 3"/>
<line x1="1459.5" y1="310" x2="1459.5" y2="452" stroke="#0000ff" stroke-width="1" stroke-dasharray="3 3"/>
<line x1="1467.5" y1="310" x2="1467.5" y2="452" stroke="#0000ff" stroke-width="1" stroke-dasharray="3 3"/>
<line x1="1475.5" y1="310" x2="1475.5" y2="452" stroke="#0000ff" stroke-width="1" stroke-dasharray="3 3"/>
<line x1="1483.5" y1="283" x2="1483.5" y2="452" stroke="#0000ff" stroke-width="1" stroke-dasharray="3 3"/>
<line x1="1491.5" y1="283" x2="1491.5" y2="452" stroke="#0000ff" stroke-width="1" stroke-dasharray="3 3"/>
<line x1="1499.5" y1="283" x2="1499.5" y2="452" stroke="#0000ff" stroke-width="1" stroke-dasharray="3 3"/>
<line x1="1507.5" y1="283" x2="1507.5" y2="452" stroke="#0000ff" stroke-width="1" stroke-dasharray="3 3"/>
<line x1="1515.5" y1="266" x2="1515.5" y2="452" stroke="#0000ff" stroke-width="1" stroke-dasharray="3 3"/>
<line x1="1523.5" y1="266" x2="1523.5" y2="452" stroke="#0000ff" stroke-width="1" stroke-dasharray="3 3"/>
<line x1="1531.5" y1="266" x2="1531.5" y2="452" stroke="#0000ff" stroke-width="1" stroke-dasharray="3 3"/>
<line x1="1539.5" y1="266" x2="1539.5" y2="452" stroke="#0000ff" stroke-width="1" stroke-dasharray="3 3"/>
<line x1="1547.5" y1="266" x2="1547.5" y2="452" stroke="#0000ff" stroke-width="1" stroke-dasharray="3 3"/>
<line x1="1555.5" y1="266" x2="1555.5" y2="452" stroke="#0000ff" stroke-width="1" stroke-dasharray="3 3"/>
<line x1="1563.5" y1="266" x2="1563.5" y2="452" stroke="#0000ff" stroke-width="1" stroke-dasharray="3 3"/>
<line x1="1571.5" y1="266" x2="1571.5" y2="452" stroke="#0000ff" stroke-width="1" stroke-dasharray="3 3"/>
<line x1="1579.5" y1="255" x2="1579.5" y2="452" stroke="#0000ff" stroke-width="1" stroke-dasharray="3 3"/>
<line x1="1587.5" y1="255" x2="1587.5" y2="452" stroke="#0000ff" stroke-width="1" stroke-dasharray="3 3"/>
<line x1="1595.5" y1="255" x2="1595.5" y2="452" stroke="#0000ff" stroke-width="1" stroke-dasharray="3 3"/>
<line x1="1603.5" y1="255" x2="1603.5" y2="452" stroke="#0000ff" stroke-width="1" stroke-dasharray="3 3"/>
<line x1="1611.5" y1="253" x2="1611.5" y2="447" stroke="#0000ff" stroke-width="1" stroke-dasharray="3 3"/>
<line x1="1619.5" y1="253" x2="1619.5" y2="447" stroke="#0000ff" stroke-width="1" stroke-dasharray="3 3"/>
<line x1="1627.5" y1="253" x2="1627.5" y2="447" stroke="#0000ff" stroke-width="1" stroke-dasharray="3 3"/>
<line x1="1635.5" y1="253" x2="1635.5" y2="447" stroke="#0000ff" stroke-width="1" stroke-dasharray="3 3"/>
<line x1="1643.5" y1="253" x2="1643.5" y2="447" stroke="#0000ff" stroke-width="1" stroke-dasharray="3 3"/>
<line x1="1651.5" y1="253" x2="1651.5" y2="447" stroke="#0000ff" stroke-width="1" stroke-dasharray="3 3"/>
<line x1="1659.5" y1="253" x2="1659.5" y2="447" stroke="#0000ff" stroke-width="1" stroke-dasharray="3 3"/>
<line x1="1667.5" y1="253" x2="1667.5" y2="447" stroke="#0000ff" stroke-width="1" stroke-dasharray="3 3"/>
<line x1="1675.5" y1="248" x2="1675.5" y2="447" stroke="#0000ff" stroke-width="1" stroke-dasharray="3 3"/>
<line x1="1683.5" y1="248" x2="1683.5" y2="447" stroke="#0000ff" stroke-width="1" stroke-dasharray="3 3"/>
<line x1="1691.5" y1="248" x2="1691.5" y2="447" stroke="#0000ff" stroke-width="1" stroke-dasharray="3 3"/>
<line x1="1699.5" y1="248" x2="1699.5" y2="447" stroke="#0000ff" stroke-width="1" stroke-dasharray="3 3"/>
<line x1="1707.5" y1="250" x2="1707.5" y2="432" stroke="#0000ff" stroke-width="1" stroke-dasharray="3 3"/>
<line x1="1715.5" y1="250" x2="1715.5" y2="432" stroke="#0000ff" stroke-width="1" stroke-dasharray="3 3"/>
<line x1="1723.5" y1="250" x2="1723.5" y2="432" stroke="#0000ff" stroke-width="1" stroke-dasharray="3 3"/>
<line x1="1731.5" y1="250" x2="1731.5" y2="432" stroke="#0000ff" stroke-width="1" stroke-dasharray="3 3"/>
<line x1="1739.5" y1="272" x2="1739.5" y2="430" stroke="#0000ff" stroke-width="1" stroke-dasharray="3 3"/>
<line x1="1747.5" y1="272" x2="1747.5" y2="430" stroke="#0000ff" stroke-width="1" stroke-dasharray="3 3"/>
<line x1="1755.5" y1="272" x2="1755.5" y2="430" stroke="#0000ff" stroke-width="1" stroke-dasharray="3 3"/>
<line x1="1763.5" y1="272" x2="1763.5" y2="430" stroke="#0000ff" stroke-width="1" stroke-dasharray="3 3"/>
<line x1="1771.5" y1="270" x2="1771.5" y2="430" stroke="#0000ff" stroke-width="1" stroke-dasharray="3 3"/>
<line x1="1779.5" y1="270" x2="1779.5" y2="430" stroke="#0000ff" stroke-width="1" stroke-dasharray="3 3"/>
<line x1="1787.5" y1="270" x2="1787.5" y2="430" stroke="#0000ff" stroke-width="1" stroke-dasharray="3 3"/>
<line x1="1795.5" y1="270" x2="1795.5" y2="430" stroke="#0000ff" stroke-width="1" stroke-dasharray="3 3"/>
<line x1="1803.5" y1="262" x2="1803.5" y2="430" stroke="#0000ff" stroke-width="1" stroke-dasharray="3 3"/>
<line x1="1811.5" y1="262" x2="1811.5" y2="430" stroke="#0000ff" stroke-width="1" stroke-dasharray="3 3"/>
<line x1="1819.5" y1="262" x2="1819.5" y2="430" stroke="#0000ff" stroke-width="1" stroke-dasharray="3 3"/>
<line x1="1827.5" y1="262" x2="1827.5" y2="430" stroke="#0000ff" stroke-width="1" stroke-dasharray="3 3"/>
<line x1="1835.5" y1="254" x2="1835.5" y2="430" stroke="#0000ff" stroke-width="1" stroke-dasharray="3 3"/>
<line x1="1843.5" y1="254" x2="1843.5" y2="430" stroke="#0000ff" stroke-width="1" stroke-dasharray="3 3"/>
<line x1="1851.5" y1="254" x2="1851.5" y2="430" stroke="#0000ff" stroke-width="1" stroke-dasharray="3 3"/>
<line x1="1859.5" y1="254" x2="1859.5" y2="430" stroke="#0000ff" stroke-width="1" stroke-dasharray="3 3"/>
<line x1="1867.5" y1="265" x2="1867.5" y2="430" stroke="#0000ff" stroke-width="1" stroke-dasharray="3 3"/>
<polyline points="4.0,767.5 36.0,767.5 44.0,758.0 68.0,758.0 76.0,752.5 100.0,752.5 108.0,716.0 132.0,716.0 140.0,713.0 196.0,713.0 204.0,719.0 228.0,719.0 236.0,730.0 260.0,730.0 268.0,740.5 356.0,740.5 364.0,745.0 388.0,745.0 396.0,736.0 420.0,736.0 428.0,745.0 452.0,745.0 460.0,748.0 484.0,748.0 492.0,745.0 580.0,745.0 588.0,737.0 676.0,737.0 684.0,727.0 772.0,727.0 780.0,723.0 804.0,723.0 812.0,718.0 836.0,718.0 844.0,723.0 868.0,723.0 876.0,713.0 900.0,713.0 908.0,684.0 932.0,684.0 940.0,640.0 964.0,640.0 972.0,617.0 996.0,617.0 1004.0,572.0 1028.0,572.0 1036.0,564.0 1060.0,564.0 1068.0,562.0 1092.0,562.0 1100.0,532.0 1124.0,532.0 1132.0,519.0 1156.0,519.0 1164.0,517.0 1220.0,517.0 1228.0,504.0 1252.0,504.0 1260.0,467.0 1284.0,467.0 1292.0,403.0 1316.0,403.0 1324.0,388.0 1348.0,388.0 1356.0,378.0 1380.0,378.0 1388.0,359.0 1412.0,359.0 1420.0,343.0 1444.0,343.0 1452.0,310.0 1476.0,310.0 1484.0,283.0 1508.0,283.0 1516.0,266.0 1572.0,266.0 1580.0,255.0 1604.0,255.0 1612.0,253.0 1668.0,253.0 1676.0,248.0 1700.0,248.0 1708.0,250.0 1732.0,250.0 1740.0,272.0 1764.0,272.0 1772.0,270.0 1796.0,270.0 1804.0,262.0 1828.0,262.0 1836.0,254.0 1860.0,254.0 1868.0,265.0 1868.0,265.0" fill="none" stroke="#ffff00" stroke-width="1" />
<polyline points="4.0,727.0 68.0,727.0 76.0,737.0 100.0,737.0 108.0,752.0 164.0,752.0 172.0,765.5 196.0,765.5 204.0,785.5 516.0,785.5 524.0,773.0 548.0,773.0 556.0,771.0 612.0,771.0 620.0,763.0 900.0,763.0 908.0,752.0 932.0,752.0 940.0,709.0 964.0,709.0 972.0,698.0 996.0,698.0 1004.0,653.0 1060.0,653.0 1068.0,606.0 1252.0,606.0 1260.0,569.0 1284.0,569.0 1292.0,519.0 1316.0,519.0 1324.0,503.0 1380.0,503.0 1388.0,485.0 1444.0,485.0 1452.0,452.0 1604.0,452.0 1612.0,447.0 1700.0,447.0 1708.0,432.0 1732.0,432.0 1740.0,430.0 1860.0,430.0 1868.0,430.0" fill="none" stroke="#ffff00" stroke-width="1" />
</g>
<g id="ind" shape-rendering="crispEdges" stroke-linejoin="round">
<polyline points="3.5,671.0 11.5,653.0 19.5,657.0 27.5,682.0 35.5,688.0 43.5,677.0 51.5,643.0 59.5,605.0 67.5,600.0 75.5,587.0 83.5,594.0 91.5,553.0 99.5,546.0 107.5,527.0 115.5,486.0 123.5,471.0 131.5,485.0 139.5,504.0 147.5,485.0 155.5,525.0 163.5,419.0 171.5,432.0 179.5,380.0 187.5,387.0 195.5,421.0 203.5,427.0 211.5,428.0 219.5,415.0 227.5,388.0 235.5,365.0 243.5,503.0 251.5,461.0 259.5,387.0 267.5,370.0 275.5,369.0 283.5,399.0 291.5,396.0 299.5,438.0 307.5,454.0 315.5,425.0 323.5,437.0 331.5,425.0 339.5,433.0 347.5,439.0 355.5,414.0 363.5,406.0 371.5,361.0 379.5,379.0 387.5,367.0 395.5,366.0 403.5,354.0 411.5,374.0 419.5,383.0 427.5,406.0 435.5,359.0 443.5,277.0 451.5,234.0 459.5,200.0 467.5,223.0 475.5,207.0 483.5,213.0 491.5,168.0 499.5,172.0 507.5,181.0 515.5,203.0 523.5,189.0 531.5,181.0 539.5,184.0 547.5,176.0 555.5,171.0 563.5,137.0 571.5,148.0 579.5,143.0 587.5,125.0 595.5,124.0 603.5,129.0 611.5,131.0 619.5,105.0 627.5,107.0 635.5,71.0 643.5,103.0 651.5,114.0 659.5,103.0 667.5,70.0 675.5,120.0 683.5,111.0 691.5,172.0 699.5,214.0 707.5,229.0 715.5,224.0 723.5,262.0 731.5,252.0 739.5,348.0 747.5,367.0 755.5,365.0 763.5,325.0 771.5,285.0 779.5,276.0 787.5,254.0 795.5,303.0 803.5,337.0 811.5,296.0 819.5,299.0 827.5,312.0 835.5,271.0 843.5,273.0 851.5,254.0 859.5,290.0 867.5,249.0 875.5,258.0 883.5,230.0 891.5,294.0 899.5,285.0 907.5,260.0 915.5,253.0 923.5,196.0 931.5,224.0 939.5,267.0 947.5,277.0 955.5,274.0 963.5,279.0 971.5,270.0 979.5,242.0 987.5,253.0 995.5,248.0 1003.5,254.0 1011.5,242.0 1019.5,253.0 1027.5,324.0 1035.5,373.0 1043.5,331.0 1051.5,306.0 1059.5,304.0 1067.5,359.0 1075.5,347.0 1083.5,351.0 1091.5,369.0 1099.5,376.0 1107.5,362.0 1115.5,367.0 1123.5,423.0 1131.5,393.0 1139.5,394.0 1147.5,363.0 1155.5,354.0 1163.5,370.0 1171.5,381.0 1179.5,375.0 1187.5,438.0 1195.5,511.0 1203.5,523.0 1211.5,476.0 1219.5,432.0 1227.5,427.0 1235.5,441.0 1243.5,424.0 1251.5,446.0 1259.5,380.0 1267.5,392.0 1275.5,418.0 1283.5,428.0 1291.5,389.0 1299.5,394.0 1307.5,419.0 1315.5,418.0" fill="none" stroke="#00ff00" stroke-width="1" />
<polyline points="3.5,181.0 11.5,184.0 19.5,184.0 27.5,184.0 35.5,184.0 43.5,148.0 51.5,148.0 59.5,148.0 67.5,148.0 75.5,129.0 83.5,129.0 91.5,129.0 99.5,129.0 107.5,71.0 115.5,71.0 123.5,71.0 131.5,71.0 139.5,70.0 147.5,70.0 155.5,70.0 163.5,70.0 171.5,214.0 179.5,214.0 187.5,214.0 195.5,214.0 203.5,252.0 211.5,252.0 219.5,252.0 227.5,252.0 235.5,325.0 243.5,325.0 251.5,325.0 259.5,325.0 267.5,303.0 275.5,303.0 283.5,303.0 291.5,303.0 299.5,312.0 307.5,312.0 315.5,312.0 323.5,312.0 331.5,290.0 339.5,290.0 347.5,290.0 355.5,290.0 363.5,294.0 371.5,294.0 379.5,294.0 387.5,294.0 395.5,196.0 403.5,196.0 411.5,196.0 419.5,196.0 427.5,274.0 435.5,274.0 443.5,274.0 451.5,274.0 459.5,253.0 467.5,253.0 475.5,253.0 483.5,253.0 491.5,253.0 499.5,253.0 507.5,253.0 515.5,253.0 523.5,306.0 531.5,306.0 539.5,306.0 547.5,306.0 555.5,351.0 563.5,351.0 571.5,351.0 579.5,351.0 587.5,367.0 595.5,367.0 603.5,367.0 611.5,367.0 619.5,363.0 627.5,363.0 635.5,363.0 643.5,363.0 651.5,375.0 659.5,375.0 667.5,375.0 675.5,375.0 683.5,438.0 691.5,511.0 699.5,523.0 707.5,476.0 715.5,432.0 723.5,427.0 731.5,441.0 739.5,424.0 747.5,446.0 755.5,380.0 763.5,392.0 771.5,418.0 779.5,428.0 787.5,389.0 795.5,394.0 803.5,419.0 811.5,418.0" fill="none" stroke="#00ff00" stroke-width="1" />
<polyline points="3.5,702.5 11.5,698.0 19.5,692.4 27.5,682.4 35.5,665.0 43.5,657.4 51.5,656.9 59.5,658.3 67.5,661.5 75.5,665.9 83.5,665.6 91.5,665.6 99.5,664.9 107.5,666.7 115.5,666.0 123.5,665.4 131.5,651.8 139.5,641.2 147.5,644.0 155.5,640.5 163.5,638.8 171.5,633.7 179.5,625.6 187.5,622.2 195.5,635.1 203.5,636.6 211.5,636.9 219.5,633.3 227.5,616.3 235.5,604.6 243.5,588.3 251.5,577.3 259.5,555.0 267.5,535.0 275.5,515.6 283.5,485.9 291.5,457.4 299.5,439.2 307.5,432.9 315.5,429.4 323.5,438.1 331.5,419.3 339.5,405.6 347.5,380.3 355.5,363.5 363.5,363.2 371.5,361.6 379.5,362.5 387.5,361.5 395.5,352.3 403.5,338.5 411.5,336.5 419.5,340.0 427.5,335.6 435.5,340.4 443.5,333.5 451.5,332.0 459.5,334.3 467.5,337.5 475.5,336.9 483.5,336.8 491.5,336.8 499.5,337.4 507.5,341.7 515.5,352.5 523.5,361.1 531.5,362.3 539.5,355.2 547.5,357.5 555.5,356.9 563.5,349.9 571.5,340.5 579.5,336.3 587.5,337.2 595.5,337.6 603.5,333.9 611.5,301.9 619.5,262.9 627.5,223.3 635.5,199.9 643.5,177.0 651.5,158.3 659.5,132.1 667.5,111.9 675.5,98.4 683.5,91.7 691.5,88.7 699.5,92.2 707.5,115.9 715.5,143.7 723.5,153.2 731.5,143.5 739.5,136.4 747.5,132.5 755.5,122.7 763.5,116.8 771.5,110.7 779.5,105.8 787.5,95.3 795.5,90.9 803.5,75.5 811.5,72.4 819.5,74.2 827.5,75.0 835.5,69.0 843.5,69.3 851.5,70.9 859.5,64.5 867.5,48.4 875.5,36.2 883.5,30.1 891.5,20.3 899.5,21.0 907.5,7.8 915.5,10.6 923.5,16.3 931.5,31.0 939.5,54.5 947.5,94.3 955.5,122.1 963.5,162.9 971.5,187.1 979.5,201.8 987.5,214.2 995.5,231.4 1003.5,233.4 1011.5,238.7 1019.5,230.6 1027.5,235.2 1035.5,236.0 1043.5,233.7 1051.5,222.8 1059.5,223.6 1067.5,227.6 1075.5,224.8 1083.5,227.8 1091.5,207.7 1099.5,201.7 1107.5,205.5 1115.5,205.4 1123.5,205.4 1131.5,206.2 1139.5,207.0 1147.5,206.0 1155.5,205.6 1163.5,208.8 1171.5,210.0 1179.5,209.4 1187.5,209.1 1195.5,200.5 1203.5,196.9 1211.5,203.1 1219.5,204.7 1227.5,205.7 1235.5,202.5 1243.5,202.5 1251.5,204.7 1259.5,213.1 1267.5,221.1 1275.5,234.9 1283.5,249.9 1291.5,267.3 1299.5,293.2 1307.5,298.1 1315.5,297.7 1323.5,301.3 1331.5,314.4 1339.5,332.8 1347.5,334.6 1355.5,331.5 1363.5,310.6 1371.5,298.0 1379.5,299.8 1387.5,307.5 1395.5,315.0 1403.5,315.6 1411.5,318.9 1419.5,323.2 1427.5,327.0 1435.5,335.9 1443.5,345.0 1451.5,353.1 1459.5,356.8 1467.5,350.6 1475.5,355.5 1483.5,370.8" fill="none" stroke="#ff0000" stroke-width="1" />
<polyline points="3.5,758.1 11.5,754.8 19.5,750.8 27.5,745.2 35.5,737.4 43.5,731.1 51.5,726.8 59.5,722.9 67.5,719.3 75.5,717.1 83.5,717.2 91.5,715.6 99.5,715.1 107.5,716.2 115.5,715.8 123.5,714.8 131.5,710.1 139.5,706.9 147.5,707.7 155.5,706.5 163.5,704.9 171.5,701.4 179.5,696.3 187.5,690.0 195.5,683.3 203.5,681.2 211.5,679.0 219.5,673.8 227.5,666.8 235.5,658.6 243.5,653.9 251.5,649.8 259.5,640.9 267.5,632.1 275.5,620.2 283.5,607.0 291.5,594.0 299.5,581.7 307.5,569.0 315.5,554.5 323.5,543.6 331.5,527.6 339.5,515.3 347.5,499.6 355.5,485.3 363.5,472.9 371.5,463.9 379.5,455.5 387.5,447.5 395.5,440.5 403.5,432.9 411.5,434.2 419.5,431.1 427.5,424.1 435.5,413.1 443.5,409.5 451.5,407.1 459.5,408.3 467.5,411.9 475.5,414.3 483.5,414.1 491.5,414.8 499.5,415.5 507.5,418.7 515.5,424.0 523.5,417.6 531.5,413.7 539.5,411.9 547.5,412.5 555.5,412.4 563.5,410.0 571.5,407.0 579.5,402.4 587.5,397.4 595.5,396.0 603.5,390.4 611.5,379.9 619.5,365.6 627.5,348.6 635.5,334.9 643.5,320.7 651.5,310.1 659.5,295.1 667.5,281.1 675.5,267.9 683.5,257.1 691.5,243.9 699.5,229.5 707.5,213.6 715.5,200.6 723.5,193.0 731.5,186.1 739.5,182.4 747.5,176.6 755.5,170.8 763.5,164.4 771.5,161.6 779.5,158.7 787.5,153.3 795.5,146.4 803.5,138.0 811.5,132.4 819.5,127.4 827.5,122.2 835.5,115.0 843.5,113.8 851.5,111.1 859.5,113.2 867.5,119.6 875.5,127.1 883.5,133.9 891.5,143.2 899.5,153.7 907.5,170.9 915.5,192.1 923.5,210.8 931.5,225.9 939.5,238.9 947.5,253.6 955.5,263.1 963.5,276.9 971.5,288.6 979.5,294.5 987.5,299.5 995.5,305.8 1003.5,306.4 1011.5,307.9 1019.5,301.2 1027.5,295.7 1035.5,287.4 1043.5,282.6 1051.5,278.7 1059.5,280.0 1067.5,282.2 1075.5,279.1 1083.5,273.1 1091.5,266.0 1099.5,260.6 1107.5,257.4 1115.5,257.9 1123.5,257.9 1131.5,259.7 1139.5,258.3 1147.5,257.8 1155.5,257.4 1163.5,258.7 1171.5,255.9 1179.5,252.8 1187.5,252.3 1195.5,257.4 1203.5,270.0 1211.5,277.6 1219.5,280.4 1227.5,282.4 1235.5,288.4 1243.5,293.3 1251.5,299.1 1259.5,308.1 1267.5,316.9 1275.5,325.1 1283.5,333.1 1291.5,346.1 1299.5,356.1 1307.5,361.1 1315.5,360.4 1323.5,362.0 1331.5,366.6 1339.5,372.1 1347.5,373.2 1355.5,379.7 1363.5,391.1 1371.5,402.1 1379.5,409.3 1387.5,414.3 1395.5,418.6 1403.5,419.9 1411.5,422.1 1419.5,425.8 1427.5,427.0 1435.5,429.7 1443.5,433.1 1451.5,436.5 1459.5,437.5 1467.5,434.4 1475.5,427.8 1483.5,420.3" fill="none" stroke="#ff0000" stroke-width="1" />
<polyline points="3.5,813.8 11.5,811.6 19.5,809.2 27.5,808.0 35.5,809.8 43.5,804.8 51.5,796.7 59.5,787.4 67.5,777.1 75.5,768.4 83.5,768.8 91.5,765.6 99.5,765.2 107.5,765.7 115.5,765.6 123.5,764.1 131.5,768.5 139.5,772.5 147.5,771.5 155.5,772.5 163.5,771.1 171.5,769.2 179.5,767.0 187.5,757.8 195.5,731.5 203.5,725.8 211.5,721.1 219.5,714.3 227.5,717.3 235.5,712.7 243.5,719.4 251.5,722.2 259.5,726.8 267.5,729.1 275.5,724.8 283.5,728.1 291.5,730.6 299.5,724.3 307.5,705.1 315.5,679.6 323.5,649.2 331.5,636.0 339.5,625.0 347.5,618.8 355.5,607.1 363.5,582.6 371.5,566.3 379.5,548.5 387.5,533.5 395.5,528.7 403.5,527.4 411.5,531.9 419.5,522.3 427.5,512.7 435.5,485.8 443.5,485.5 451.5,482.3 459.5,482.2 467.5,486.3 475.5,491.7 483.5,491.5 491.5,492.7 499.5,493.6 507.5,495.7 515.5,495.5 523.5,474.2 531.5,465.1 539.5,468.6 547.5,467.5 555.5,467.8 563.5,470.1 571.5,473.5 579.5,468.5 587.5,457.5 595.5,454.4 603.5,447.0 611.5,457.9 619.5,468.3 627.5,473.8 635.5,469.9 643.5,464.4 651.5,462.0 659.5,458.0 667.5,450.4 675.5,437.5 683.5,422.6 691.5,399.1 699.5,366.8 707.5,311.4 715.5,257.4 723.5,232.8 731.5,228.6 739.5,228.3 747.5,220.8 755.5,218.9 763.5,212.1 771.5,212.6 779.5,211.6 787.5,211.3 795.5,201.9 803.5,200.5 811.5,192.4 819.5,180.7 827.5,169.4 835.5,161.0 843.5,158.3 851.5,151.4 859.5,161.9 867.5,190.8 875.5,218.0 883.5,237.6 891.5,266.1 899.5,286.5 907.5,334.0 915.5,373.6 923.5,405.3 931.5,420.7 939.5,423.2 947.5,412.8 955.5,404.2 963.5,390.8 971.5,390.2 979.5,387.2 987.5,384.8 995.5,380.2 1003.5,379.5 1011.5,377.2 1019.5,371.8 1027.5,356.3 1035.5,338.9 1043.5,331.6 1051.5,334.6 1059.5,336.4 1067.5,336.8 1075.5,333.5 1083.5,318.4 1091.5,324.3 1099.5,319.6 1107.5,309.3 1115.5,310.3 1123.5,310.5 1131.5,313.3 1139.5,309.6 1147.5,309.5 1155.5,309.2 1163.5,308.6 1171.5,301.8 1179.5,296.2 1187.5,295.5 1195.5,314.2 1203.5,343.1 1211.5,352.2 1219.5,356.1 1227.5,359.0 1235.5,374.3 1243.5,384.1 1251.5,393.4 1259.5,403.2 1267.5,412.7 1275.5,415.3 1283.5,416.4 1291.5,424.8 1299.5,419.0 1307.5,424.1 1315.5,423.0 1323.5,422.7 1331.5,418.8 1339.5,411.4 1347.5,411.8 1355.5,427.9 1363.5,471.7 1371.5,506.2 1379.5,518.8 1387.5,521.1 1395.5,522.2 1403.5,524.1 1411.5,525.3 1419.5,528.4 1427.5,527.0 1435.5,523.5 1443.5,521.3 1451.5,519.9 1459.5,518.2 1467.5,518.1 1475.5,500.1 1483.5,469.7" fill="none" stroke="#ff0000" stroke-width="1" />
<polyline points="3.5,737.5 11.5,737.5 19.5,737.5 27.5,719.0 35.5,697.5 43.5,695.0 51.5,695.0 59.5,695.0 67.5,692.5 75.5,701.5 83.5,716.0 91.5,716.0 99.5,730.5 107.5,737.5 115.5,737.5 123.5,737.5 131.5,715.5 139.5,702.0 147.5,678.5 155.5,676.0 163.5,674.5 171.5,671.5 179.5,671.5 187.5,664.0 195.5,666.0 203.5,682.0 211.5,682.0 219.5,674.0 227.5,660.5 235.5,649.5 243.5,649.5 251.5,645.0 259.5,618.5 267.5,607.5 275.5,575.5 283.5,548.5 291.5,535.5 299.5,530.5 307.5,528.5 315.5,512.5 323.5,498.5 331.5,470.5 339.5,454.5 347.5,454.5 355.5,454.5 363.5,454.5 371.5,454.5 379.5,454.5 387.5,399.5 395.5,404.0 403.5,397.0 411.5,429.5 419.5,434.5 427.5,434.5 435.5,434.5 443.5,434.5 451.5,434.5 459.5,434.5 467.5,436.5 475.5,417.5 483.5,416.5 491.5,416.5 499.5,421.0 507.5,430.5 515.5,435.0 523.5,433.0 531.5,429.5 539.5,416.0 547.5,415.0 555.5,415.0 563.5,415.0 571.5,395.0 579.5,393.0 587.5,381.0 595.5,387.0 603.5,376.5 611.5,350.0 619.5,327.0 627.5,310.0 635.5,300.0 643.5,300.0 651.5,283.5 659.5,260.0 667.5,230.0 675.5,193.0 683.5,193.0 691.5,184.5 699.5,180.5 707.5,199.5 715.5,199.5 723.5,194.5 731.5,181.5 739.5,181.5 747.5,181.5 755.5,181.5 763.5,154.5 771.5,147.5 779.5,142.0 787.5,131.0 795.5,119.5 803.5,97.0 811.5,97.0 819.5,97.0 827.5,97.0 835.5,88.0 843.5,88.0 851.5,88.0 859.5,122.5 867.5,149.5 875.5,160.5 883.5,163.5 891.5,214.0 899.5,233.0 907.5,233.5 915.5,273.5 923.5,289.0 931.5,289.0 939.5,298.5 947.5,298.5 955.5,308.5 963.5,316.5 971.5,311.5 979.5,311.5 987.5,300.5 995.5,300.5 1003.5,300.5 1011.5,300.5 1019.5,294.5 1027.5,292.0 1035.5,291.0 1043.5,283.0 1051.5,273.0 1059.5,274.5 1067.5,274.5 1075.5,274.5 1083.5,274.5 1091.5,257.0 1099.5,255.5 1107.5,255.5 1115.5,249.5 1123.5,241.5 1131.5,241.5 1139.5,241.5 1147.5,241.5 1155.5,256.5 1163.5,267.0 1171.5,263.5 1179.5,256.5 1187.5,256.5 1195.5,303.5 1203.5,303.5 1211.5,303.5 1219.5,303.5 1227.5,303.5 1235.5,305.0 1243.5,315.0 1251.5,334.5 1259.5,334.5 1267.5,334.5 1275.5,334.5 1283.5,346.5 1291.5,381.5 1299.5,391.5 1307.5,391.5 1315.5,398.0 1323.5,389.0 1331.5,389.0 1339.5,389.0 1347.5,389.0 1355.5,390.0 1363.5,427.0 1371.5,433.0 1379.5,440.5 1387.5,447.0 1395.5,447.0 1403.5,456.0 1411.5,472.5 1419.5,472.5 1427.5,446.5 1435.5,420.5 1443.5,411.0 1451.5,411.0 1459.5,411.0 1467.5,411.0 1475.5,411.0 1483.5,395.0" fill="none" stroke="#ff0000" stroke-width="1" />
<polyline points="3.5,737.0 11.5,737.0 19.5,737.0 27.5,737.0 35.5,737.0 43.5,737.0 51.5,737.0 59.5,737.0 67.5,737.0 75.5,737.0 83.5,737.0 91.5,737.0 99.5,737.0 107.5,737.0 115.5,737.0 123.5,737.0 131.5,737.0 139.5,713.0 147.5,713.0 155.5,713.0 163.5,713.0 171.5,713.0 179.5,713.0 187.5,713.0 195.5,713.0 203.5,690.0 211.5,690.0 219.5,690.0 227.5,690.0 235.5,663.0 243.5,663.0 251.5,663.0 259.5,663.0 267.5,620.5 275.5,620.5 283.5,620.5 291.5,620.5 299.5,583.5 307.5,583.5 315.5,583.5 323.5,583.5 331.5,536.0 339.5,536.0 347.5,536.0 355.5,536.0 363.5,536.0 371.5,536.0 379.5,536.0 387.5,536.0 395.5,534.0 403.5,534.0 411.5,534.0 419.5,534.0 427.5,483.0 435.5,483.0 443.5,483.0 451.5,483.0 459.5,455.5 467.5,455.5 475.5,455.5 483.5,455.5 491.5,452.5 499.5,452.5 507.5,452.5 515.5,452.5 523.5,452.5 531.5,452.5 539.5,452.5 547.5,452.5 555.5,434.5 563.5,434.5 571.5,434.5 579.5,434.5 587.5,397.5 595.5,397.5 603.5,397.5 611.5,397.5 619.5,328.5 627.5,328.5 635.5,328.5 643.5,328.5 651.5,310.5 659.5,310.5 667.5,310.5 675.5,310.5 683.5,307.0 691.5,307.0 699.5,307.0 707.5,307.0 715.5,273.0 723.5,273.0 731.5,273.0 739.5,273.0 747.5,265.0 755.5,265.0 763.5,265.0 771.5,265.0 779.5,233.0 787.5,233.0 795.5,233.0 803.5,233.0 811.5,180.0 819.5,180.0 827.5,180.0 835.5,180.0 843.5,149.5 851.5,149.5 859.5,149.5 867.5,149.5 875.5,201.5 883.5,201.5 891.5,201.5 899.5,201.5 907.5,211.0 915.5,211.0 923.5,211.0 931.5,211.0 939.5,211.0 947.5,211.0 955.5,211.0 963.5,211.0 971.5,211.0 979.5,211.0 987.5,211.0 995.5,211.0 1003.5,218.5 1011.5,218.5 1019.5,218.5 1027.5,218.5 1035.5,223.5 1043.5,223.5 1051.5,223.5 1059.5,223.5 1067.5,284.0 1075.5,284.0 1083.5,284.0 1091.5,284.0 1099.5,282.5 1107.5,282.5 1115.5,282.5 1123.5,282.5 1131.5,266.5 1139.5,266.5 1147.5,266.5 1155.5,266.5 1163.5,266.5 1171.5,266.5 1179.5,266.5 1187.5,266.5 1195.5,282.5 1203.5,282.5 1211.5,282.5 1219.5,282.5 1227.5,282.5 1235.5,282.5 1243.5,282.5 1251.5,282.5 1259.5,289.0 1267.5,289.0 1275.5,289.0 1283.5,289.0 1291.5,311.5 1299.5,311.5 1307.5,311.5 1315.5,311.5 1323.5,332.5 1331.5,332.5 1339.5,332.5 1347.5,332.5 1355.5,378.5 1363.5,378.5 1371.5,378.5 1379.5,378.5 1387.5,390.0 1395.5,390.0 1403.5,390.0 1411.5,390.0 1419.5,409.5 1427.5,409.5 1435.5,409.5 1443.5,409.5 1451.5,435.0 1459.5,435.0 1467.5,435.0 1475.5,435.0 1483.5,435.0" fill="none" stroke="#ff0000" stroke-width="1" />
<polyline points="3.5,745.0 11.5,745.0 19.5,745.0 27.5,744.0 35.5,727.5 43.5,725.0 51.5,725.0 59.5,717.5 67.5,717.5 75.5,717.5 83.5,717.5 91.5,717.5 99.5,717.5 107.5,717.5 115.5,717.5 123.5,717.5 131.5,717.0 139.5,702.0 147.5,702.0 155.5,702.0 163.5,702.0 171.5,702.0 179.5,702.0 187.5,702.0 195.5,702.0 203.5,702.0 211.5,702.0 219.5,702.0 227.5,690.0 235.5,679.0 243.5,679.0 251.5,674.5 259.5,639.5 267.5,631.0 275.5,613.0 283.5,599.5 291.5,591.0 299.5,591.0 307.5,591.0 315.5,591.0 323.5,580.0 331.5,552.0 339.5,536.0 347.5,536.0 355.5,536.0 363.5,536.0 371.5,521.0 379.5,516.0 387.5,500.5 395.5,485.0 403.5,480.5 411.5,473.5 419.5,471.5 427.5,455.5 435.5,452.5 443.5,452.5 451.5,452.5 459.5,452.5 467.5,452.5 475.5,452.5 483.5,452.5 491.5,452.5 499.5,434.5 507.5,434.5 515.5,434.5 523.5,434.5 531.5,434.5 539.5,434.5 547.5,434.5 555.5,434.5 563.5,434.5 571.5,434.5 579.5,434.5 587.5,415.5 595.5,414.5 603.5,404.0 611.5,377.5 619.5,354.5 627.5,337.5 635.5,327.5 643.5,324.0 651.5,315.5 659.5,315.5 667.5,307.0 675.5,307.0 683.5,291.0 691.5,289.0 699.5,283.0 707.5,283.0 715.5,283.0 723.5,278.0 731.5,265.0 739.5,265.0 747.5,265.0 755.5,265.0 763.5,257.0 771.5,233.5 779.5,212.0 787.5,180.0 795.5,170.5 803.5,149.5 811.5,149.5 819.5,149.5 827.5,149.5 835.5,149.5 843.5,149.5 851.5,149.5 859.5,149.5 867.5,149.5 875.5,148.0 883.5,151.0 891.5,201.5 899.5,201.5 907.5,201.5 915.5,211.0 923.5,211.0 931.5,211.0 939.5,211.0 947.5,211.0 955.5,211.0 963.5,211.0 971.5,218.5 979.5,223.5 987.5,223.5 995.5,223.5 1003.5,223.5 1011.5,242.5 1019.5,243.0 1027.5,273.5 1035.5,289.0 1043.5,289.0 1051.5,298.5 1059.5,298.5 1067.5,301.5 1075.5,301.5 1083.5,296.5 1091.5,279.0 1099.5,266.5 1107.5,266.5 1115.5,266.5 1123.5,266.5 1131.5,266.5 1139.5,264.0 1147.5,264.0 1155.5,264.0 1163.5,255.5 1171.5,255.5 1179.5,255.5 1187.5,255.5 1195.5,282.5 1203.5,282.5 1211.5,282.5 1219.5,282.5 1227.5,282.5 1235.5,282.5 1243.5,282.5 1251.5,282.5 1259.5,282.5 1267.5,297.5 1275.5,303.5 1283.5,310.0 1291.5,326.5 1299.5,332.5 1307.5,332.5 1315.5,332.5 1323.5,332.5 1331.5,332.5 1339.5,332.5 1347.5,334.0 1355.5,345.0 1363.5,401.5 1371.5,407.5 1379.5,409.5 1387.5,409.5 1395.5,415.0 1403.5,433.5 1411.5,435.0 1419.5,435.0 1427.5,435.0 1435.5,435.0 1443.5,435.0 1451.5,435.0 1459.5,435.0 1467.5,435.0 1475.5,435.0 1483.5,435.0" fill="none" stroke="#0000ff" stroke-width="1" />
<polyline points="3.5,733.0 11.5,733.0 19.5,733.0 27.5,733.0 35.5,733.0 43.5,733.0 51.5,733.0 59.5,733.0 67.5,733.0 75.5,733.0 83.5,733.0 91.5,733.0 99.5,733.0 107.5,733.0 115.5,733.0 123.5,733.0 131.5,733.0 139.5,733.0 147.5,733.0 155.5,733.0 163.5,733.0 171.5,733.0 179.5,733.0 187.5,733.0 195.5,733.0 203.5,733.0 211.5,733.0 219.5,733.0 227.5,733.0 235.5,705.6 243.5,705.6 251.5,705.6 259.5,705.6 267.5,657.8 275.5,657.8 283.5,657.8 291.5,657.8 299.5,647.3 307.5,647.3 315.5,647.3 323.5,647.3 331.5,602.0 339.5,602.0 347.5,602.0 355.5,602.0 363.5,587.5 371.5,587.5 379.5,587.5 387.5,587.5 395.5,583.8 403.5,583.8 411.5,583.8 419.5,583.8 427.5,583.8 435.5,583.8 443.5,583.8 451.5,583.8 459.5,583.8 467.5,583.8 475.5,583.8 483.5,583.8 491.5,583.8 499.5,583.8 507.5,583.8 515.5,583.8 523.5,583.8 531.5,583.8 539.5,583.8 547.5,583.8 555.5,575.0 563.5,575.0 571.5,575.0 579.5,575.0 587.5,543.0 595.5,543.0 603.5,543.0 611.5,543.0 619.5,477.0 627.5,477.0 635.5,477.0 643.5,477.0 651.5,459.5 659.5,459.5 667.5,459.5 675.5,459.5 683.5,459.5 691.5,459.5 699.5,459.5 707.5,459.5 715.5,441.5 723.5,441.5 731.5,441.5 739.5,441.5 747.5,415.5 755.5,415.5 763.5,415.5 771.5,415.5 779.5,380.0 787.5,380.0 795.5,380.0 803.5,380.0 811.5,380.0 819.5,380.0 827.5,380.0 835.5,380.0 843.5,380.0 851.5,380.0 859.5,380.0 867.5,380.0 875.5,329.0 883.5,329.0 891.5,329.0 899.5,329.0 907.5,301.5 915.5,301.5 923.5,301.5 931.5,301.5 939.5,298.5 947.5,298.5 955.5,298.5 963.5,298.5 971.5,298.5 979.5,298.5 987.5,298.5 995.5,298.5 1003.5,280.5 1011.5,280.5 1019.5,280.5 1027.5,280.5 1035.5,280.5 1043.5,280.5 1051.5,280.5 1059.5,280.5 1067.5,261.5 1075.5,261.5 1083.5,261.5 1091.5,261.5 1099.5,260.5 1107.5,260.5 1115.5,260.5 1123.5,260.5 1131.5,257.0 1139.5,257.0 1147.5,257.0 1155.5,257.0 1163.5,241.0 1171.5,241.0 1179.5,241.0 1187.5,241.0 1195.5,233.0 1203.5,233.0 1211.5,233.0 1219.5,233.0 1227.5,233.0 1235.5,233.0 1243.5,233.0 1251.5,233.0 1259.5,217.5 1267.5,217.5 1275.5,217.5 1283.5,217.5 1291.5,240.0 1299.5,240.0 1307.5,240.0 1315.5,240.0 1323.5,240.0 1331.5,240.0 1339.5,240.0 1347.5,240.0 1355.5,286.0 1363.5,286.0 1371.5,286.0 1379.5,286.0 1387.5,286.0 1395.5,286.0 1403.5,286.0 1411.5,286.0 1419.5,286.0 1427.5,286.0 1435.5,286.0 1443.5,286.0 1451.5,293.5 1459.5,293.5 1467.5,293.5 1475.5,293.5 1483.5,298.5" fill="none" stroke="#0000ff" stroke-width="1" />
<polyline points="3.0,728.0 74.0,727.0 148.0,727.0 204.0,727.0 240.0,726.0 293.0,720.0 333.0,707.0 367.0,693.0 400.0,678.0 440.0,660.0 480.0,642.0 533.0,618.0 573.0,600.0 613.0,580.0 633.0,568.0 667.0,545.0 700.0,518.0 733.0,493.0 767.0,468.0 800.0,445.0 833.0,420.0 860.0,400.0 873.0,391.0 907.0,372.0 923.0,365.0 933.0,361.0 957.0,347.0 993.0,333.0 1023.0,317.0 1057.0,303.0 1090.0,290.0 1123.0,282.0 1157.0,273.0 1190.0,268.0 1223.0,265.0 1257.0,263.0 1280.0,262.0 1313.0,260.0 1357.0,259.0 1380.0,263.0 1413.0,270.0 1447.0,278.0 1483.0,287.0" fill="none" stroke="#0000ff" stroke-width="2.6" />
<polyline points="3.0,764.0 28.0,758.0 56.0,751.0 74.0,747.0 93.0,743.0 111.0,740.0 130.0,736.0 148.0,731.0 167.0,727.0 185.0,723.0 204.0,720.0 222.0,717.0 240.0,712.0 247.0,710.0 283.0,690.0 320.0,663.0 353.0,633.0 383.0,612.0 417.0,587.0 450.0,560.0 483.0,530.0 517.0,507.0 550.0,483.0 583.0,460.0 617.0,433.0 640.0,413.0 673.0,383.0 703.0,360.0 740.0,327.0 773.0,297.0 807.0,270.0 840.0,250.0 873.0,233.0 907.0,223.0 940.0,217.0 973.0,210.0 1007.0,203.0 1040.0,207.0 1073.0,213.0 1107.0,220.0 1140.0,230.0 1173.0,237.0 1207.0,253.0 1240.0,273.0 1280.0,292.0 1313.0,300.0 1347.0,310.0 1380.0,323.0 1413.0,333.0 1440.0,343.0 1453.0,349.0" fill="none" stroke="#ffff00" stroke-width="2" />
<polyline points="3.0,751.0 18.0,750.0 28.0,746.0 37.0,739.0 48.0,732.0 61.0,728.0 74.0,726.0 89.0,725.0 100.0,720.0 111.0,717.0 126.0,714.0 137.0,709.0 148.0,706.0 163.0,705.0 178.0,699.0 193.0,697.0 204.0,696.0 213.0,694.0 222.0,689.0 231.0,682.0 240.0,672.0 257.0,656.0 274.0,640.0 289.0,621.0 304.0,603.0 322.0,584.0 341.0,558.0 354.0,533.0 363.0,520.0 378.0,498.0 393.0,477.0 404.0,463.0 418.0,453.0 430.0,442.0 444.0,431.0 459.0,424.0 470.0,418.0 481.0,414.0 500.0,414.0 513.0,418.0 524.0,417.0 537.0,412.0 563.0,410.0 570.0,405.0 580.0,399.0 593.0,400.0 604.0,401.0 615.0,392.0 630.0,373.0 648.0,347.0 667.0,318.0 685.0,290.0 704.0,264.0 711.0,257.0 730.0,233.0 744.0,211.0 759.0,187.0 770.0,176.0 785.0,167.0 800.0,156.0 813.0,146.0 826.0,141.0 841.0,133.0 853.0,127.0 864.0,127.0 878.0,131.0 890.0,138.0 901.0,148.0 912.0,163.0 923.0,179.0 936.0,195.0 951.0,210.0 966.0,226.0 981.0,247.0 992.0,261.0 1003.0,274.0 1014.0,284.0 1025.0,289.0 1036.0,292.0 1047.0,291.0 1058.0,294.0 1066.0,291.0 1073.0,287.0 1082.0,280.0 1097.0,272.0 1116.0,271.0 1130.0,269.0 1141.0,264.0 1156.0,260.0 1171.0,257.0 1186.0,256.0 1193.0,259.0 1203.0,265.0 1210.0,270.0 1227.0,271.0 1238.0,276.0 1249.0,286.0 1260.0,297.0 1271.0,304.0 1282.0,311.0 1291.0,319.0 1306.0,333.0 1321.0,348.0 1338.0,361.0 1353.0,372.0 1367.0,385.0 1380.0,396.0 1393.0,403.0 1408.0,411.0 1419.0,414.0 1427.0,416.0 1445.0,417.0 1464.0,417.0 1475.0,420.0" fill="none" stroke="#ffffff" stroke-width="2" />
</g>
<g id="srdots">
<line x1="801" y1="42" x2="964" y2="42" stroke="#87ceeb" stroke-width="2" stroke-dasharray="2 6"/>
<line x1="727" y1="107" x2="772" y2="107" stroke="#87ceeb" stroke-width="2" stroke-dasharray="2 6"/>
<line x1="1103" y1="183" x2="1156" y2="183" stroke="#87ceeb" stroke-width="2" stroke-dasharray="2 6"/>
<line x1="337" y1="354" x2="388" y2="354" stroke="#87ceeb" stroke-width="2" stroke-dasharray="2 6"/>
<line x1="409" y1="349" x2="580" y2="349" stroke="#87ceeb" stroke-width="2" stroke-dasharray="2 6"/>
<line x1="137" y1="627" x2="196" y2="627" stroke="#87ceeb" stroke-width="2" stroke-dasharray="2 6"/>
<line x1="1177" y1="226" x2="1348" y2="226" stroke="#87ceeb" stroke-width="2" stroke-dasharray="2 6"/>
<line x1="1441" y1="359" x2="1484" y2="359" stroke="#87ceeb" stroke-width="2" stroke-dasharray="2 6"/>
<line x1="66" y1="777" x2="196" y2="777" stroke="#ffd0e0" stroke-width="2" stroke-dasharray="2 6"/>
<line x1="417" y1="518" x2="580" y2="518" stroke="#ffd0e0" stroke-width="2" stroke-dasharray="2 6"/>
<line x1="593" y1="425" x2="772" y2="425" stroke="#ffd0e0" stroke-width="2" stroke-dasharray="2 6"/>
<line x1="913" y1="374" x2="964" y2="374" stroke="#ffd0e0" stroke-width="2" stroke-dasharray="2 6"/>
<line x1="975" y1="352" x2="1156" y2="352" stroke="#ffd0e0" stroke-width="2" stroke-dasharray="2 6"/>
<line x1="1295" y1="442" x2="1348" y2="442" stroke="#ffd0e0" stroke-width="2" stroke-dasharray="2 6"/>
<line x1="1383" y1="540" x2="1451" y2="540" stroke="#ffd0e0" stroke-width="2" stroke-dasharray="2 6"/>
<rect x="0" y="0" width="0" height="0"/>
<line x1="587" y1="518.5" x2="1160" y2="518.5" stroke="#ffc0cb" stroke-width="1" stroke-dasharray="3 3"/>
<rect x="0" y="0" width="0" height="0"/>
<line x1="780" y1="425.5" x2="1304" y2="425.5" stroke="#ffc0cb" stroke-width="1" stroke-dasharray="3 3"/>
<rect x="0" y="0" width="0" height="0"/>
<line x1="971" y1="374.5" x2="1199" y2="374.5" stroke="#ffc0cb" stroke-width="1" stroke-dasharray="3 3"/>
</g>
<g id="circ" shape-rendering="auto" fill="none" stroke="#ff0000" stroke-width="1.4">
<circle cx="627.5" cy="219.5" r="4"/><rect x="627" y="219" width="2" height="2" fill="#ff0000" stroke="none"/>
<circle cx="643.5" cy="209.5" r="4"/><rect x="643" y="209" width="2" height="2" fill="#ff0000" stroke="none"/>
<circle cx="651.5" cy="205.5" r="4"/><rect x="651" y="205" width="2" height="2" fill="#ff0000" stroke="none"/>
<circle cx="659.5" cy="200.5" r="4"/><rect x="659" y="200" width="2" height="2" fill="#ff0000" stroke="none"/>
<circle cx="667.5" cy="195.5" r="4"/><rect x="667" y="195" width="2" height="2" fill="#ff0000" stroke="none"/>
<circle cx="715.5" cy="167.5" r="4"/><rect x="715" y="167" width="2" height="2" fill="#ff0000" stroke="none"/>
<circle cx="723.5" cy="163.5" r="4"/><rect x="723" y="163" width="2" height="2" fill="#ff0000" stroke="none"/>
<circle cx="731.5" cy="157.5" r="4"/><rect x="731" y="157" width="2" height="2" fill="#ff0000" stroke="none"/>
<circle cx="779.5" cy="128.5" r="4"/><rect x="779" y="128" width="2" height="2" fill="#ff0000" stroke="none"/>
<circle cx="787.5" cy="124.5" r="4"/><rect x="787" y="124" width="2" height="2" fill="#ff0000" stroke="none"/>
<circle cx="795.5" cy="119.5" r="4"/><rect x="795" y="119" width="2" height="2" fill="#ff0000" stroke="none"/>
<circle cx="803.5" cy="114.5" r="4"/><rect x="803" y="114" width="2" height="2" fill="#ff0000" stroke="none"/>
<circle cx="867.5" cy="212.5" r="4"/><rect x="867" y="212" width="2" height="2" fill="#ff0000" stroke="none"/>
<circle cx="875.5" cy="228.5" r="4"/><rect x="875" y="228" width="2" height="2" fill="#ff0000" stroke="none"/>
<circle cx="883.5" cy="249.5" r="4"/><rect x="883" y="249" width="2" height="2" fill="#ff0000" stroke="none"/>
<circle cx="891.5" cy="251.5" r="4"/><rect x="891" y="251" width="2" height="2" fill="#ff0000" stroke="none"/>
<circle cx="907.5" cy="349.5" r="4"/><rect x="907" y="349" width="2" height="2" fill="#ff0000" stroke="none"/>
<circle cx="915.5" cy="352.5" r="4"/><rect x="915" y="352" width="2" height="2" fill="#ff0000" stroke="none"/>
<circle cx="923.5" cy="367.5" r="4"/><rect x="923" y="367" width="2" height="2" fill="#ff0000" stroke="none"/>
<circle cx="971.5" cy="349.5" r="4"/><rect x="971" y="349" width="2" height="2" fill="#ff0000" stroke="none"/>
<circle cx="995.5" cy="337.5" r="4"/><rect x="995" y="337" width="2" height="2" fill="#ff0000" stroke="none"/>
<circle cx="1059.5" cy="307.5" r="4"/><rect x="1059" y="307" width="2" height="2" fill="#ff0000" stroke="none"/>
<circle cx="1067.5" cy="302.5" r="4"/><rect x="1067" y="302" width="2" height="2" fill="#ff0000" stroke="none"/>
</g>
<g id="icons" shape-rendering="auto">
<defs><mask id="md" maskUnits="userSpaceOnUse" x="-11" y="-11" width="22" height="22"><circle cx="0" cy="0" r="10" fill="#fff"/><path d="M-4 -11 h8 v14 h2.5 l-6.5 6 l-6.5 -6 h2.5 z" fill="#000"/></mask>
<mask id="mu" maskUnits="userSpaceOnUse" x="-11" y="-11" width="22" height="22"><circle cx="0" cy="0" r="10" fill="#fff"/><path d="M-4 11 h8 v-14 h2.5 l-6.5 -6 l-6.5 6 h2.5 z" fill="#000"/></mask></defs>
<g transform="translate(771.0 33.5)"><rect x="-11" y="-11" width="22" height="22" fill="#ff0000" mask="url(#md)"/></g>
<g transform="translate(1195.0 163.5)"><rect x="-11" y="-11" width="22" height="22" fill="#ff0000" mask="url(#md)"/></g>
<g transform="translate(411.0 251.5)"><rect x="-11" y="-11" width="22" height="22" fill="#ff0000" mask="url(#md)"/></g>
<g transform="translate(1354.5 330.5)"><rect x="-11" y="-11" width="22" height="22" fill="#ff0000" mask="url(#md)"/></g>
<g transform="translate(75.0 666.7)"><rect x="-11" y="-11" width="22" height="22" fill="#ff0000" mask="url(#md)"/></g>
<g transform="translate(1019.0 325.0)"><rect x="-11" y="-11" width="22" height="22" fill="#ffff00" mask="url(#mu)"/></g>
<g transform="translate(611.0 394.6)"><rect x="-11" y="-11" width="22" height="22" fill="#ffff00" mask="url(#mu)"/></g>
<g transform="translate(1339.0 428.8)"><rect x="-11" y="-11" width="22" height="22" fill="#ffff00" mask="url(#mu)"/></g>
<g transform="translate(1411.0 497.3)"><rect x="-11" y="-11" width="22" height="22" fill="#ffff00" mask="url(#mu)"/></g>
<g transform="translate(131.0 758.7)"><rect x="-11" y="-11" width="22" height="22" fill="#ffff00" mask="url(#mu)"/></g>
</g>
<polyline points="1475.0,420.0 1480.5,396.0 1486.0,369.0 1492.0,341.0 1497.5,315.0 1502.0,292.0 1510.0,235.0 1518.5,173.0 1528.5,100.0 1539.5,3.0" fill="none" stroke="#ff00ff" stroke-width="1" shape-rendering="crispEdges"/>
<g id="fc">
<line x1="1475" y1="420" x2="1555" y2="455" stroke="#ffff00" stroke-width="1"/>
<line x1="1475" y1="421" x2="1555" y2="456" stroke="#7fff00" stroke-width="1"/>
<line x1="1475" y1="422" x2="1555" y2="457" stroke="#00bfff" stroke-width="1"/>
<rect x="1560" y="448" width="3" height="5" fill="#fff"/><rect x="1559" y="454" width="5" height="4" fill="#fff"/><rect x="1560" y="459" width="4" height="3" fill="#fff"/>
</g>
<g id="boxes" fill="none" font-family="Liberation Sans, sans-serif" font-size="10.5" stroke-width="1">
<rect x="1339.5" y="9.5" width="32" height="33" stroke="#ffa500"/>
<text x="1343" y="39" fill="#ffa500" stroke="none">LWH</text>
<rect x="1435.5" y="9.5" width="16" height="33" stroke="#ff0000"/>
<text x="1438" y="39" fill="#ff0000" stroke="none" font-size="12.5">M</text>
<rect x="1371.5" y="192.5" width="32" height="34" stroke="#ffff00"/>
<text x="1376" y="223" fill="#ffff00" stroke="none">YDH</text>
<rect x="1275.5" y="243.5" width="32" height="33" stroke="#ffffff"/>
<text x="1280" y="263" fill="#ffffff" stroke="none">YDO</text>
<rect x="1451.5" y="325.5" width="16" height="34" stroke="#ffa500"/>
<text x="1453" y="356" fill="#ffa500" stroke="none" font-size="12.5">W</text>
<rect x="1467.5" y="325.5" width="16" height="34" stroke="#ffff00"/>
<text x="1470" y="356" fill="#ffff00" stroke="none" font-size="12.5">D</text>
<rect x="1275.5" y="359.5" width="32" height="33" stroke="#ffffff"/>
<text x="1280" y="379" fill="#ffffff" stroke="none">YDC</text>
<rect x="1307.5" y="421.5" width="33" height="32" stroke="#ff0000"/>
<text x="1312" y="450" fill="#ff0000" stroke="none">LMH</text>
<rect x="1384" y="439" width="7" height="15" fill="#000" stroke="none"/>
<rect x="1371.5" y="443.5" width="32" height="33" stroke="#ffff00"/>
<text x="1376" y="456" fill="#ffff00" stroke="none">YDL</text>
<rect x="1339.5" y="518.5" width="32" height="33" stroke="#ffa500"/>
<text x="1343" y="530" fill="#ffa500" stroke="none">LWL</text>
<rect x="1451.5" y="540.5" width="16" height="34" stroke="#ffa500"/>
<text x="1453" y="553" fill="#ffa500" stroke="none" font-size="12.5">W</text>
<rect x="1467.5" y="540.5" width="16" height="34" stroke="#ffff00"/>
<text x="1470" y="553" fill="#ffff00" stroke="none" font-size="12.5">D</text>
<line x1="1372" y1="42.5" x2="1483" y2="42.5" stroke="#ffa500" stroke-dasharray="18 6"/>
<line x1="1404" y1="226.5" x2="1483" y2="226.5" stroke="#ffff00" stroke-dasharray="18 6"/>
<line x1="1323" y1="375.5" x2="1477" y2="375.5" stroke="#ffffff" stroke-dasharray="18 6"/>
<line x1="1372" y1="518.5" x2="1483" y2="518.5" stroke="#ffa500" stroke-dasharray="18 6"/>
<line x1="1404" y1="443.5" x2="1483" y2="443.5" stroke="#ffff00" stroke-dasharray="18 6"/>
<line x1="1340" y1="437.5" x2="1483" y2="437.5" stroke="#ff0000" stroke-dasharray="18 6"/>
<line x1="1299.5" y1="335" x2="1299.5" y2="359" stroke="#ffffff"/>
</g>
</g>
<g id="macd" shape-rendering="crispEdges" stroke-linejoin="round">
<rect x="3" y="954" width="1872" height="1" fill="#ff0000" />
<polyline points="3.3,947.3 20.0,941.7 36.7,936.0 53.3,933.3 66.7,931.7 83.3,935.0 100.0,937.3 116.7,939.3 133.3,936.7 150.0,932.7 166.7,930.0 183.3,927.7 200.0,925.0 216.7,924.0 233.3,921.0 250.0,915.0 266.7,905.0 283.3,893.3 300.0,880.0 316.7,870.0 333.3,863.3 350.0,851.7 366.7,841.7 383.3,837.3 403.3,834.3 420.0,840.7 433.3,843.3 450.0,845.0 466.7,851.7 483.3,861.7 500.0,871.7 516.7,881.7 533.3,890.0 550.0,895.0 566.7,896.0 583.3,898.3 603.3,900.7 620.0,896.7 630.0,890.0 640.0,881.7 653.3,870.0 666.7,858.3 683.3,850.0 700.0,843.3 723.3,840.0 746.7,838.3 773.3,838.3 806.7,841.7 840.0,847.7 856.7,855.0 873.3,868.3 890.0,886.7 906.7,910.0 923.3,936.7 933.3,955.0 940.0,965.0 956.7,981.7 973.3,993.3 990.0,1001.0 1006.7,1004.3 1023.3,1003.3 1040.0,998.3 1056.7,992.7 1073.3,988.3 1090.0,981.7 1106.7,973.3 1123.3,969.3 1140.0,966.7 1163.3,963.3 1180.0,960.0 1193.3,959.3 1206.7,963.3 1223.3,969.3 1240.0,976.0 1256.7,982.7 1280.0,991.7 1293.3,1000.0 1306.7,1006.0 1323.3,1007.3 1346.7,1006.7 1363.3,1012.7 1380.0,1020.0 1396.7,1025.0 1413.3,1024.3 1430.0,1020.0 1446.7,1014.0 1463.3,1006.7 1475.7,1001.7" fill="none" stroke="#ffffff" stroke-width="1" stroke-dasharray="3 3"/>
<polyline points="3.3,930.0 20.0,930.0 28.3,925.0 36.7,919.0 45.0,918.0 53.3,921.7 66.7,929.3" fill="none" stroke="#32cd32" stroke-width="2.4" />
<polyline points="66.7,929.3 83.3,946.7 96.7,944.0 110.0,943.3 116.7,941.0 124.0,940.7" fill="none" stroke="#ff69a0" stroke-width="2.4" />
<polyline points="124.0,940.7 131.7,931.7 140.0,922.7 146.7,922.7 153.3,920.7 163.3,921.7 171.7,921.3 180.0,917.3 190.0,917.3 200.0,921.7 208.3,924.3 215.0,924.0 221.7,920.0 230.0,911.7 240.0,901.7 251.7,894.0 263.3,880.0 276.7,868.3 291.7,845.0 300.0,840.0 315.0,840.0 323.3,846.0 331.7,835.0 340.0,829.3 348.3,818.3 356.0,812.7 363.3,815.0 375.0,821.7 385.0,827.7 396.7,827.7 403.3,825.7" fill="none" stroke="#32cd32" stroke-width="2.4" />
<polyline points="403.3,825.7 411.7,846.7 419.3,858.7 430.0,856.0 443.3,852.7 460.0,862.7 475.0,885.7 491.7,900.0 503.3,906.7 516.7,915.0 531.7,915.0 540.0,906.7 555.0,902.3 571.7,897.7 586.7,901.7 595.0,909.0 603.3,909.0 611.7,893.3" fill="none" stroke="#ff69a0" stroke-width="2.4" />
<polyline points="611.7,893.3 620.0,873.3 628.3,856.0 640.0,842.7 651.7,835.0 660.0,824.0 668.3,817.7 676.7,817.7 688.3,823.3 700.0,826.7 721.7,835.0 733.3,834.3 746.7,836.7 763.3,838.3" fill="none" stroke="#32cd32" stroke-width="2.4" />
<polyline points="763.3,838.3 778.3,845.0 796.7,846.0 805.0,844.0 813.3,848.3 826.7,856.7 836.7,856.7 851.7,870.0 860.0,888.3 873.3,920.0 886.7,946.7 891.7,957.3 900.0,970.0 906.7,990.0 916.7,1018.3 923.3,1031.7 932.7,1039.0 940.0,1036.0 955.0,1022.7 962.7,1022.7 971.7,1028.3 986.7,1022.3 995.0,1021.7 1011.7,1005.0" fill="none" stroke="#ff69a0" stroke-width="2.4" />
<polyline points="1011.7,1005.0 1020.0,996.7 1026.7,996.0 1035.0,986.7 1043.3,981.0 1051.7,973.3 1059.3,976.0 1068.3,976.0 1083.3,968.3 1091.7,955.0 1100.0,948.7 1106.7,950.0 1116.7,956.0 1131.7,960.0 1140.0,960.7 1148.3,956.7 1163.3,954.3 1171.7,953.3 1180.0,950.0 1186.7,950.0 1195.0,963.3" fill="none" stroke="#32cd32" stroke-width="2.4" />
<polyline points="1195.0,963.3 1203.3,980.0 1211.7,986.0 1226.7,986.0 1235.0,995.0 1251.7,1003.3 1268.3,1012.3 1275.0,1012.3 1280.0,1015.0 1291.7,1025.0 1300.0,1024.0 1308.3,1024.0 1323.3,1012.3 1330.0,1008.3 1338.3,1007.7" fill="none" stroke="#ff69a0" stroke-width="2.4" />
<polyline points="1338.3,1007.7 1346.7,1004.3" fill="none" stroke="#32cd32" stroke-width="2.4" />
<polyline points="1346.7,1004.3 1353.3,1011.7 1361.7,1026.7 1370.7,1045.7 1379.0,1048.3 1386.7,1042.7 1395.0,1035.0 1403.3,1030.7 1411.7,1024.0" fill="none" stroke="#ff69a0" stroke-width="2.4" />
<polyline points="1411.7,1024.0 1418.3,1022.7 1426.7,1008.3 1435.0,999.3 1443.3,995.0 1450.7,995.0 1460.0,985.7 1468.3,979.3 1475.7,979.3" fill="none" stroke="#32cd32" stroke-width="2.4" />
</g>
<g id="frame">
<rect x="2" y="2" width="1874" height="1" fill="#ffffff" />
<rect x="2" y="2" width="1" height="1075" fill="#ffffff"/>
<rect x="1874" y="2" width="1" height="1075" fill="#ffffff"/>
<rect x="2" y="797" width="1874" height="1" fill="#ffffff" />
<rect x="2" y="799" width="1874" height="1" fill="#ffffff" />
<rect x="2" y="1060" width="1874" height="1" fill="#ffffff" />
<rect x="2" y="1062" width="1874" height="1" fill="#ffffff" />
<rect x="2" y="1076" width="1874" height="1" fill="#ffffff" />
</g>
<g id="axis" font-family="Liberation Sans, sans-serif" font-size="10.5" fill="#ffffff" shape-rendering="crispEdges">
<rect x="1875" y="31" width="2" height="1" fill="#ffffff" />
<text x="1880" y="36.5" textLength="33" lengthAdjust="spacingAndGlyphs">159.485</text>
<rect x="1875" y="65" width="2" height="1" fill="#ffffff" />
<text x="1880" y="69.6" textLength="33" lengthAdjust="spacingAndGlyphs">159.350</text>
<rect x="1875" y="98" width="2" height="1" fill="#ffffff" />
<text x="1880" y="102.7" textLength="33" lengthAdjust="spacingAndGlyphs">159.215</text>
<rect x="1875" y="131" width="2" height="1" fill="#ffffff" />
<text x="1880" y="135.8" textLength="33" lengthAdjust="spacingAndGlyphs">159.080</text>
<rect x="1875" y="164" width="2" height="1" fill="#ffffff" />
<text x="1880" y="168.9" textLength="33" lengthAdjust="spacingAndGlyphs">158.945</text>
<rect x="1875" y="197" width="2" height="1" fill="#ffffff" />
<text x="1880" y="202.0" textLength="33" lengthAdjust="spacingAndGlyphs">158.810</text>
<rect x="1875" y="230" width="2" height="1" fill="#ffffff" />
<text x="1880" y="235.2" textLength="33" lengthAdjust="spacingAndGlyphs">158.675</text>
<rect x="1875" y="263" width="2" height="1" fill="#ffffff" />
<text x="1880" y="268.3" textLength="33" lengthAdjust="spacingAndGlyphs">158.540</text>
<rect x="1875" y="296" width="2" height="1" fill="#ffffff" />
<text x="1880" y="301.4" textLength="33" lengthAdjust="spacingAndGlyphs">158.405</text>
<rect x="1875" y="329" width="2" height="1" fill="#ffffff" />
<text x="1880" y="334.5" textLength="33" lengthAdjust="spacingAndGlyphs">158.270</text>
<rect x="1875" y="363" width="2" height="1" fill="#ffffff" />
<text x="1880" y="367.6" textLength="33" lengthAdjust="spacingAndGlyphs">158.135</text>
<rect x="1875" y="396" width="2" height="1" fill="#ffffff" />
<text x="1880" y="400.7" textLength="33" lengthAdjust="spacingAndGlyphs">158.000</text>
<rect x="1875" y="429" width="2" height="1" fill="#ffffff" />
<text x="1880" y="433.8" textLength="33" lengthAdjust="spacingAndGlyphs">157.865</text>
<rect x="1875" y="462" width="2" height="1" fill="#ffffff" />
<text x="1880" y="466.9" textLength="33" lengthAdjust="spacingAndGlyphs">157.730</text>
<rect x="1875" y="495" width="2" height="1" fill="#ffffff" />
<text x="1880" y="500.0" textLength="33" lengthAdjust="spacingAndGlyphs">157.595</text>
<rect x="1875" y="528" width="2" height="1" fill="#ffffff" />
<text x="1880" y="533.1" textLength="33" lengthAdjust="spacingAndGlyphs">157.460</text>
<rect x="1875" y="561" width="2" height="1" fill="#ffffff" />
<text x="1880" y="566.2" textLength="33" lengthAdjust="spacingAndGlyphs">157.325</text>
<rect x="1875" y="594" width="2" height="1" fill="#ffffff" />
<text x="1880" y="599.3" textLength="33" lengthAdjust="spacingAndGlyphs">157.190</text>
<rect x="1875" y="627" width="2" height="1" fill="#ffffff" />
<text x="1880" y="632.5" textLength="33" lengthAdjust="spacingAndGlyphs">157.055</text>
<rect x="1875" y="661" width="2" height="1" fill="#ffffff" />
<text x="1880" y="665.6" textLength="33" lengthAdjust="spacingAndGlyphs">156.920</text>
<rect x="1875" y="694" width="2" height="1" fill="#ffffff" />
<text x="1880" y="698.7" textLength="33" lengthAdjust="spacingAndGlyphs">156.785</text>
<rect x="1875" y="727" width="2" height="1" fill="#ffffff" />
<text x="1880" y="731.8" textLength="33" lengthAdjust="spacingAndGlyphs">156.650</text>
<rect x="1875" y="760" width="2" height="1" fill="#ffffff" />
<text x="1880" y="764.9" textLength="33" lengthAdjust="spacingAndGlyphs">156.515</text>
<rect x="1875" y="793" width="2" height="1" fill="#ffffff" />
<text x="1880" y="798.0" textLength="33" lengthAdjust="spacingAndGlyphs">156.380</text>
<rect x="1877" y="413" width="39" height="11" fill="#ffffff"/><text x="1880" y="422" fill="#000" textLength="33" lengthAdjust="spacingAndGlyphs">157.912</text>
<rect x="1876" y="949" width="5" height="10" fill="#ff0000"/>
<text x="1878" y="810" textLength="22" lengthAdjust="spacingAndGlyphs">0.302</text><text x="1878" y="958" textLength="18" lengthAdjust="spacingAndGlyphs">0.00</text><text x="1877" y="1057" textLength="26" lengthAdjust="spacingAndGlyphs">-0.207</text><text x="1878" y="1073" textLength="30" lengthAdjust="spacingAndGlyphs">225959</text>
</g>
<g id="bottom">
<rect x="3" y="1063" width="40" height="13" fill="#a00000"/>
<rect x="43" y="1063" width="40" height="13" fill="#0000a0"/>
<rect x="83" y="1063" width="40" height="13" fill="#a000a0"/>
<rect x="123" y="1063" width="40" height="13" fill="#303030"/>
<rect x="163" y="1063" width="72" height="13" fill="#a00000"/>
<rect x="235" y="1063" width="40" height="13" fill="#0000a0"/>
<rect x="275" y="1063" width="40" height="13" fill="#a000a0"/>
<rect x="315" y="1063" width="40" height="13" fill="#303030"/>
<rect x="355" y="1063" width="8" height="13" fill="#a00000"/>
<rect x="157" y="1063" width="6" height="13" fill="#006400"/><rect x="348" y="1063" width="7" height="13" fill="#006400"/>
<text x="144" y="1074" font-family="Liberation Sans, sans-serif" font-weight="bold" font-size="11" fill="#fff">1/19</text>
<text x="336" y="1074" font-family="Liberation Sans, sans-serif" font-weight="bold" font-size="11" fill="#fff">1/20</text>
<svg x="904" y="1064" width="63" height="12"><rect x="0" y="0" width="63" height="12" fill="#727072"/><text x="3" y="14" font-family="Liberation Sans, sans-serif" font-size="13" fill="#00ff00" textLength="55" lengthAdjust="spacingAndGlyphs">macd ON</text></svg>
</g>
<g id="labels" font-family="Liberation Sans, Noto Sans CJK JP, sans-serif" fill="#ffffff">
<text x="1227" y="22" font-size="13.3" textLength="321" lengthAdjust="spacingAndGlyphs">売り小さめ・超えるとストップロス買い小さめ 159.50</text>
<text x="1408" y="96" font-size="13.3" textLength="140" lengthAdjust="spacingAndGlyphs">売りやや小さめ 159.20</text>
<text x="1211" y="145" font-size="13.3" textLength="337" lengthAdjust="spacingAndGlyphs">売り、OP19日NYカット大きめ/OP20日NYカット 159.00</text>
<text x="1408" y="169" font-size="13.3" textLength="140" lengthAdjust="spacingAndGlyphs">売りやや小さめ 158.90</text>
<text x="1200" y="218" font-size="13.3" textLength="348" lengthAdjust="spacingAndGlyphs">売りやや小さめ・超えるとストップロス買い小さめ 158.70</text>
<text x="1358" y="268" font-size="13.3" textLength="190" lengthAdjust="spacingAndGlyphs">OP21日NYカット大きめ 158.50</text>
<text x="1474" y="341" font-size="13.3" textLength="74" lengthAdjust="spacingAndGlyphs">売り 158.20</text>
<text x="1221" y="390" font-size="13.3" textLength="327" lengthAdjust="spacingAndGlyphs">OP20・24日NYカット/OP21日NYカット大きめ 158.00</text>
<text x="1408" y="484" font-size="13.3" textLength="140" lengthAdjust="spacingAndGlyphs">買いやや小さめ 157.70</text>
<text x="1474" y="533" font-size="13.3" textLength="74" lengthAdjust="spacingAndGlyphs">買い 157.50</text>
<text x="1330" y="558" font-size="13.3" textLength="218" lengthAdjust="spacingAndGlyphs">割り込むとストップロス売り 157.40</text>
<text x="1358" y="656" font-size="13.3" textLength="190" lengthAdjust="spacingAndGlyphs">買い、OP21日NYカット 157.00</text>
<text x="1408" y="754" font-size="13.3" textLength="140" lengthAdjust="spacingAndGlyphs">買いやや小さめ 156.60</text>
<svg x="0" y="0" width="1875" height="797"><text x="1397" y="803" font-size="13.3" textLength="151" lengthAdjust="spacingAndGlyphs">OP22日NYカット 156.40</text></svg>
<text x="74" y="136" font-size="64.5" textLength="325" lengthAdjust="spacingAndGlyphs">USDJPY H1</text>
<text x="17" y="14" font-size="10.5" textLength="198" lengthAdjust="spacingAndGlyphs">USDJPY,H1  157.912 157.912 157.912 157.912</text>
<text x="10" y="89" font-size="10.5" textLength="150" lengthAdjust="spacingAndGlyphs">Channel size = 1038 Slope = -11.89</text>
<text x="6" y="812" font-size="10.5">H1  macd (12)</text>
<text x="1784" y="15" font-size="12" textLength="88" lengthAdjust="spacingAndGlyphs">1/19 06:37 更新</text>
</g>
</svg></body></html>
